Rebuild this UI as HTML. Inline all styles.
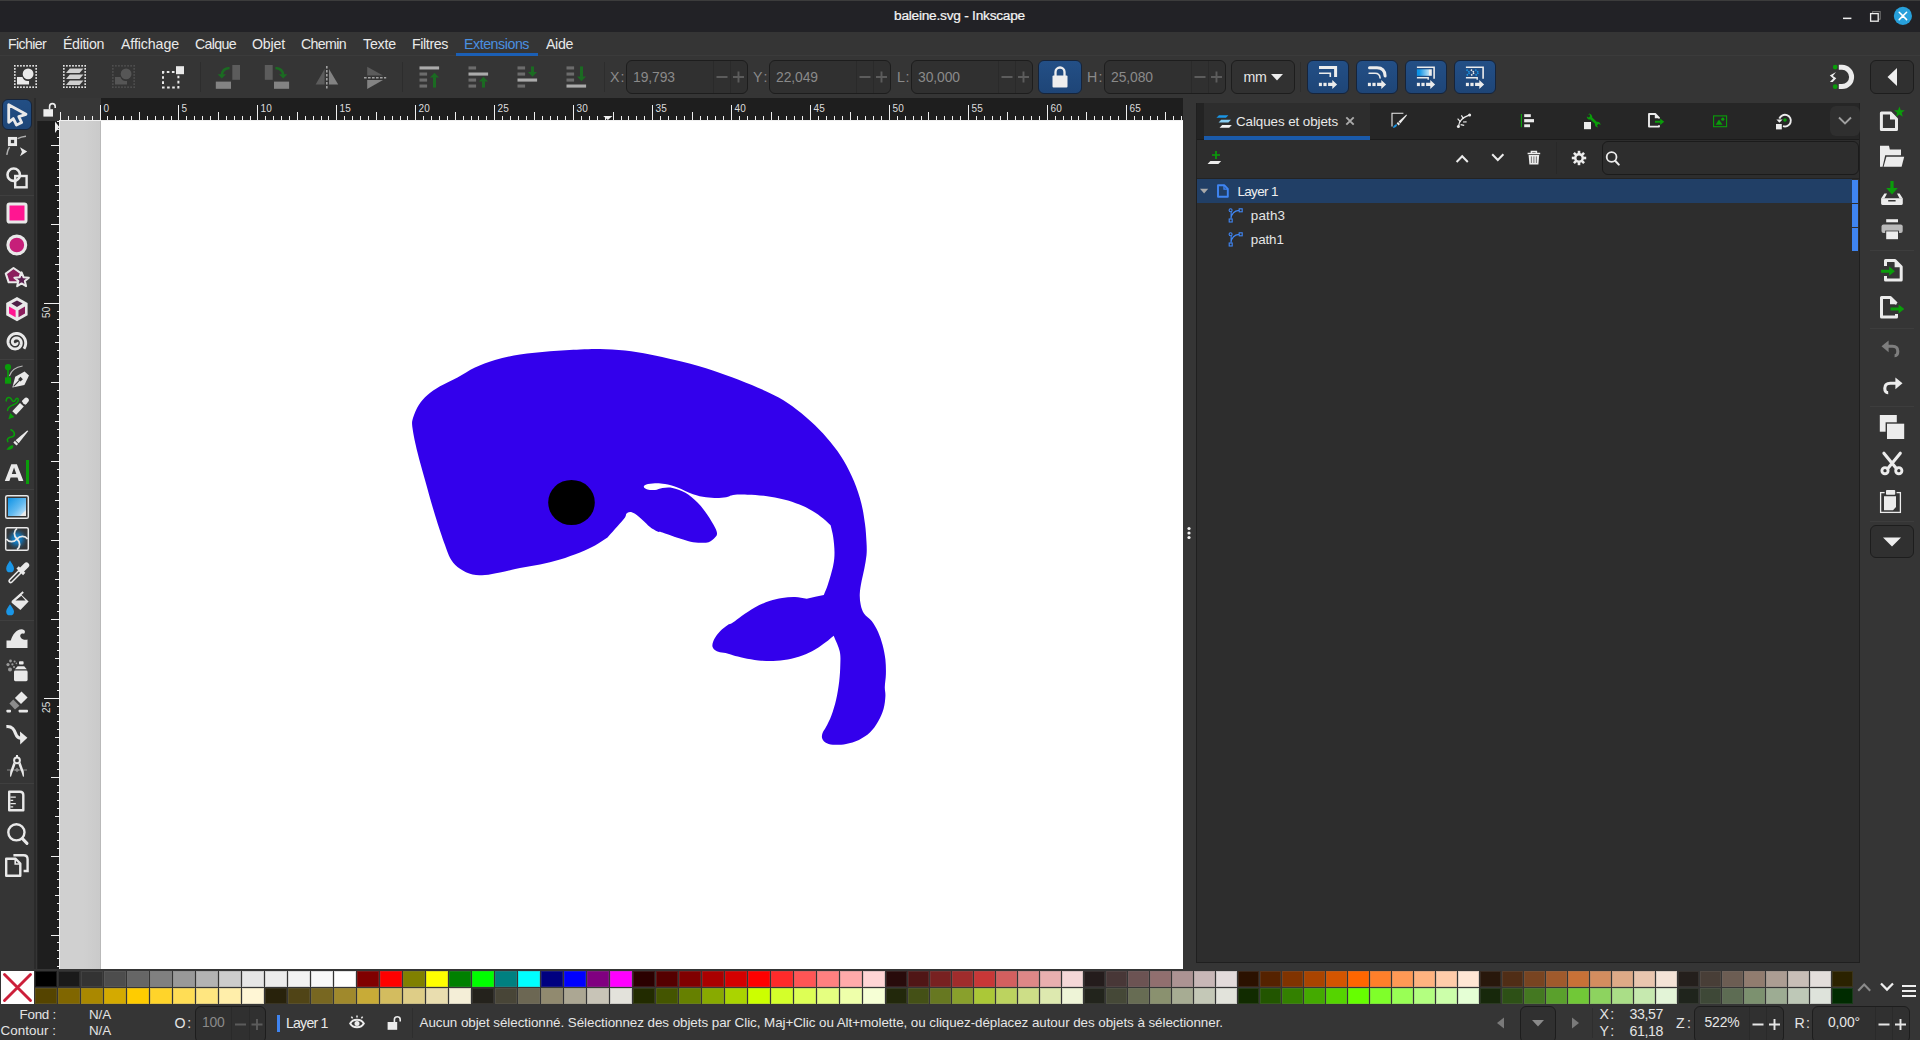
<!DOCTYPE html>
<html><head><meta charset="utf-8"><title>baleine.svg - Inkscape</title><style>html,body{margin:0;padding:0;background:#353535}
body{width:1920px;height:1040px;overflow:hidden;position:relative;font-family:"Liberation Sans",sans-serif}
#r{position:absolute;left:0;top:0;width:1920px;height:1040px;overflow:hidden}
#r div,#r svg,#r .t{position:absolute}
.t{white-space:nowrap;line-height:1}
.pal i{position:absolute;display:block;box-shadow:inset 0 0 0 1px rgba(120,120,120,.22)}
</style></head><body><div id="r">
<div style="left:0px;top:0px;width:1920px;height:1040px;background:#353535;"></div>
<div style="left:0px;top:0px;width:1920px;height:32px;background:#222226;"></div>
<div style="left:0px;top:0px;width:1920px;height:1px;background:#3c3c3c;"></div>
<div style="left:0px;top:55px;width:1920px;height:1px;background:#3b3b3b;"></div>
<div class="t" id="t0" style="left:894px;top:9.39px;font-size:13.7px;color:#f4f4f4;letter-spacing:-0.237px;-webkit-text-stroke:0.22px #f4f4f4;">baleine.svg - Inkscape</div>
<svg style="left:1836px;top:4px" width="84" height="26"><rect x="7" y="13.6" width="8.4" height="1.5" fill="#eee"/><rect x="36.6" y="7.6" width="7.6" height="7.6" fill="none" stroke="#777" stroke-width="1"/><rect x="34.6" y="9.6" width="7.6" height="7.6" fill="#222226" stroke="#eee" stroke-width="1.3"/><circle cx="66.9" cy="11.9" r="9.1" fill="#27a0db"/><path d="M63.2,8.2 L70.6,15.6 M70.6,8.2 L63.2,15.6" stroke="#fff" stroke-width="1.5" stroke-linecap="round"/></svg>
<div class="t" id="t1" style="left:8px;top:37.18px;font-size:14.2px;color:#e9e9e9;letter-spacing:-0.654px;">Fichier</div>
<div class="t" id="t2" style="left:63px;top:37.18px;font-size:14.2px;color:#e9e9e9;letter-spacing:-0.342px;">Édition</div>
<div class="t" id="t3" style="left:121px;top:37.18px;font-size:14.2px;color:#e9e9e9;letter-spacing:-0.101px;">Affichage</div>
<div class="t" id="t4" style="left:195px;top:37.18px;font-size:14.2px;color:#e9e9e9;letter-spacing:-0.661px;">Calque</div>
<div class="t" id="t5" style="left:252px;top:37.18px;font-size:14.2px;color:#e9e9e9;letter-spacing:-0.184px;">Objet</div>
<div class="t" id="t6" style="left:301px;top:37.18px;font-size:14.2px;color:#e9e9e9;letter-spacing:-0.648px;">Chemin</div>
<div class="t" id="t7" style="left:363px;top:37.18px;font-size:14.2px;color:#e9e9e9;letter-spacing:-0.184px;">Texte</div>
<div class="t" id="t8" style="left:412px;top:37.18px;font-size:14.2px;color:#e9e9e9;letter-spacing:-0.375px;">Filtres</div>
<div class="t" id="t9" style="left:464px;top:37.18px;font-size:14.2px;color:#4a90e0;letter-spacing:-0.441px;">Extensions</div>
<div class="t" id="t10" style="left:546px;top:37.18px;font-size:14.2px;color:#e9e9e9;letter-spacing:-0.352px;">Aide</div>
<div style="left:456px;top:53px;width:82px;height:3px;background:#1b5fb5;"></div>
<div class="t" id="t11" style="left:610px;top:70.18px;font-size:14.2px;color:#8a8a8a;letter-spacing:-1.453px;">X :</div>
<div class="t" id="t12" style="left:753px;top:70.18px;font-size:14.2px;color:#8a8a8a;letter-spacing:-1.365px;">Y :</div>
<div class="t" id="t13" style="left:897px;top:70.18px;font-size:14.2px;color:#8a8a8a;letter-spacing:-1.417px;">L :</div>
<div class="t" id="t14" style="left:1087px;top:70.18px;font-size:14.2px;color:#8a8a8a;letter-spacing:-1.380px;">H :</div>
<div style="left:626px;top:60px;width:122px;height:34px;box-sizing:border-box;border:1px solid #1d1d1d;border-radius:6px;background:#303030"></div>
<div style="left:713px;top:61px;width:1px;height:32px;background:#2a2a2a;"></div>
<div style="left:730px;top:61px;width:1px;height:32px;background:#2a2a2a;"></div>
<div class="t" id="t15" style="left:633px;top:70.63px;font-size:13.9px;color:#8a8a8a;letter-spacing:-0.083px;">19,793</div>
<svg style="left:626px;top:60px" width="122" height="34"><path d="M90.5,17.0 h11 M107.0,17.0 h11 M112.5,11.5 v11" stroke="#5c5c5c" stroke-width="1.9" fill="none"/></svg>
<div style="left:769px;top:60px;width:122px;height:34px;box-sizing:border-box;border:1px solid #1d1d1d;border-radius:6px;background:#303030"></div>
<div style="left:856px;top:61px;width:1px;height:32px;background:#2a2a2a;"></div>
<div style="left:873px;top:61px;width:1px;height:32px;background:#2a2a2a;"></div>
<div class="t" id="t16" style="left:776px;top:70.63px;font-size:13.9px;color:#8a8a8a;letter-spacing:-0.083px;">22,049</div>
<svg style="left:769px;top:60px" width="122" height="34"><path d="M90.5,17.0 h11 M107.0,17.0 h11 M112.5,11.5 v11" stroke="#5c5c5c" stroke-width="1.9" fill="none"/></svg>
<div style="left:911px;top:60px;width:122px;height:34px;box-sizing:border-box;border:1px solid #1d1d1d;border-radius:6px;background:#303030"></div>
<div style="left:998px;top:61px;width:1px;height:32px;background:#2a2a2a;"></div>
<div style="left:1015px;top:61px;width:1px;height:32px;background:#2a2a2a;"></div>
<div class="t" id="t17" style="left:918px;top:70.63px;font-size:13.9px;color:#8a8a8a;letter-spacing:-0.083px;">30,000</div>
<svg style="left:911px;top:60px" width="122" height="34"><path d="M90.5,17.0 h11 M107.0,17.0 h11 M112.5,11.5 v11" stroke="#5c5c5c" stroke-width="1.9" fill="none"/></svg>
<div style="left:1104px;top:60px;width:122px;height:34px;box-sizing:border-box;border:1px solid #1d1d1d;border-radius:6px;background:#303030"></div>
<div style="left:1191px;top:61px;width:1px;height:32px;background:#2a2a2a;"></div>
<div style="left:1208px;top:61px;width:1px;height:32px;background:#2a2a2a;"></div>
<div class="t" id="t18" style="left:1111px;top:70.63px;font-size:13.9px;color:#8a8a8a;letter-spacing:-0.083px;">25,080</div>
<svg style="left:1104px;top:60px" width="122" height="34"><path d="M90.5,17.0 h11 M107.0,17.0 h11 M112.5,11.5 v11" stroke="#5c5c5c" stroke-width="1.9" fill="none"/></svg>
<div style="left:1038px;top:60px;width:44px;height:34px;box-sizing:border-box;border:1px solid #16243a;border-radius:6px;background:linear-gradient(#234f86,#1e4577)"></div>
<svg style="left:1038px;top:60px" width="44" height="34"><rect x="14.5" y="15.5" width="15" height="12" rx="1" fill="#eee"/><path d="M17.5,16 v-4 a4.5,4.5 0 0 1 9,0 v4" stroke="#eee" stroke-width="2.3" fill="none"/></svg>
<div style="left:1231px;top:60px;width:64px;height:34px;box-sizing:border-box;border:1px solid #1d1d1d;border-radius:6px;background:#313131"></div>
<div class="t" id="t19" style="left:1243.5px;top:70.18px;font-size:14.2px;color:#e6e6e6;letter-spacing:-0.320px;">mm</div>
<svg style="left:1270px;top:72px" width="14" height="10"><path d="M1,2 L13,2 L7,8.5 Z" fill="#eee"/></svg>
<div style="left:200px;top:62px;width:1px;height:30px;background:#2d2d2d;"></div>
<div style="left:402px;top:62px;width:1px;height:30px;background:#2d2d2d;"></div>
<div style="left:604px;top:62px;width:1px;height:30px;background:#2d2d2d;"></div>
<div style="left:1300px;top:62px;width:1px;height:30px;background:#2d2d2d;"></div>
<div style="left:1306.5px;top:60px;width:42.8px;height:33.5px;box-sizing:border-box;border:1px solid #16243a;border-radius:6px;background:linear-gradient(#234f86,#1e4577)"></div>
<div style="left:1355.5px;top:60px;width:42.8px;height:33.5px;box-sizing:border-box;border:1px solid #16243a;border-radius:6px;background:linear-gradient(#234f86,#1e4577)"></div>
<div style="left:1404.5px;top:60px;width:42.8px;height:33.5px;box-sizing:border-box;border:1px solid #16243a;border-radius:6px;background:linear-gradient(#234f86,#1e4577)"></div>
<div style="left:1453.5px;top:60px;width:42.8px;height:33.5px;box-sizing:border-box;border:1px solid #16243a;border-radius:6px;background:linear-gradient(#234f86,#1e4577)"></div>
<div style="left:1870px;top:60px;width:44px;height:34px;box-sizing:border-box;border:1px solid #1d1d1d;border-radius:6px;background:#303030"></div>
<svg style="left:1870px;top:60px" width="44" height="34"><path d="M17.5,17 L27,8 L27,26 Z" fill="#eee"/></svg>
<div style="left:34px;top:98px;width:2px;height:871px;background:#2b2b2b;"></div>
<div style="left:1.8px;top:98.5px;width:30.5px;height:31px;box-sizing:border-box;border:1px solid #16243a;border-radius:6px;background:linear-gradient(#224e84,#1e4678)"></div>
<div style="left:0px;top:195px;width:34px;height:1px;background:#3f3f3f;"></div>
<div style="left:0px;top:359px;width:34px;height:1px;background:#3f3f3f;"></div>
<div style="left:0px;top:489px;width:34px;height:1px;background:#3f3f3f;"></div>
<div style="left:0px;top:620px;width:34px;height:1px;background:#3f3f3f;"></div>
<div style="left:0px;top:783px;width:34px;height:1px;background:#3f3f3f;"></div>
<div style="left:37px;top:98px;width:1146px;height:23px;background:#1e1e1e;"></div>
<div style="left:37px;top:98px;width:23px;height:23px;background:#353535;"></div>
<div style="left:60px;top:98px;width:41px;height:22px;background:#373737;"></div>
<div style="left:37px;top:121px;width:23px;height:848px;background:#1e1e1e;"></div>
<div style="left:37px;top:121px;width:1px;height:848px;background:#242424;"></div>
<svg style="left:0;top:0" width="1200" height="970" fill="#f0f0f0" shape-rendering="crispEdges"><rect x="60" y="112" width="1" height="8"/><rect x="68" y="116" width="1" height="4"/><rect x="76" y="116" width="1" height="4"/><rect x="84" y="116" width="1" height="4"/><rect x="92" y="116" width="1" height="4"/><rect x="100" y="105" width="1" height="15"/><rect x="107" y="116" width="1" height="4"/><rect x="115" y="116" width="1" height="4"/><rect x="123" y="116" width="1" height="4"/><rect x="131" y="116" width="1" height="4"/><rect x="139" y="112" width="1" height="8"/><rect x="147" y="116" width="1" height="4"/><rect x="155" y="116" width="1" height="4"/><rect x="163" y="116" width="1" height="4"/><rect x="171" y="116" width="1" height="4"/><rect x="178" y="105" width="1" height="15"/><rect x="186" y="116" width="1" height="4"/><rect x="194" y="116" width="1" height="4"/><rect x="202" y="116" width="1" height="4"/><rect x="210" y="116" width="1" height="4"/><rect x="218" y="112" width="1" height="8"/><rect x="226" y="116" width="1" height="4"/><rect x="234" y="116" width="1" height="4"/><rect x="242" y="116" width="1" height="4"/><rect x="250" y="116" width="1" height="4"/><rect x="257" y="105" width="1" height="15"/><rect x="265" y="116" width="1" height="4"/><rect x="273" y="116" width="1" height="4"/><rect x="281" y="116" width="1" height="4"/><rect x="289" y="116" width="1" height="4"/><rect x="297" y="112" width="1" height="8"/><rect x="305" y="116" width="1" height="4"/><rect x="313" y="116" width="1" height="4"/><rect x="321" y="116" width="1" height="4"/><rect x="328" y="116" width="1" height="4"/><rect x="336" y="105" width="1" height="15"/><rect x="344" y="116" width="1" height="4"/><rect x="352" y="116" width="1" height="4"/><rect x="360" y="116" width="1" height="4"/><rect x="368" y="116" width="1" height="4"/><rect x="376" y="112" width="1" height="8"/><rect x="384" y="116" width="1" height="4"/><rect x="392" y="116" width="1" height="4"/><rect x="400" y="116" width="1" height="4"/><rect x="407" y="116" width="1" height="4"/><rect x="415" y="105" width="1" height="15"/><rect x="423" y="116" width="1" height="4"/><rect x="431" y="116" width="1" height="4"/><rect x="439" y="116" width="1" height="4"/><rect x="447" y="116" width="1" height="4"/><rect x="455" y="112" width="1" height="8"/><rect x="463" y="116" width="1" height="4"/><rect x="471" y="116" width="1" height="4"/><rect x="478" y="116" width="1" height="4"/><rect x="486" y="116" width="1" height="4"/><rect x="494" y="105" width="1" height="15"/><rect x="502" y="116" width="1" height="4"/><rect x="510" y="116" width="1" height="4"/><rect x="518" y="116" width="1" height="4"/><rect x="526" y="116" width="1" height="4"/><rect x="534" y="112" width="1" height="8"/><rect x="542" y="116" width="1" height="4"/><rect x="550" y="116" width="1" height="4"/><rect x="557" y="116" width="1" height="4"/><rect x="565" y="116" width="1" height="4"/><rect x="573" y="105" width="1" height="15"/><rect x="581" y="116" width="1" height="4"/><rect x="589" y="116" width="1" height="4"/><rect x="597" y="116" width="1" height="4"/><rect x="605" y="116" width="1" height="4"/><rect x="613" y="112" width="1" height="8"/><rect x="621" y="116" width="1" height="4"/><rect x="628" y="116" width="1" height="4"/><rect x="636" y="116" width="1" height="4"/><rect x="644" y="116" width="1" height="4"/><rect x="652" y="105" width="1" height="15"/><rect x="660" y="116" width="1" height="4"/><rect x="668" y="116" width="1" height="4"/><rect x="676" y="116" width="1" height="4"/><rect x="684" y="116" width="1" height="4"/><rect x="692" y="112" width="1" height="8"/><rect x="700" y="116" width="1" height="4"/><rect x="707" y="116" width="1" height="4"/><rect x="715" y="116" width="1" height="4"/><rect x="723" y="116" width="1" height="4"/><rect x="731" y="105" width="1" height="15"/><rect x="739" y="116" width="1" height="4"/><rect x="747" y="116" width="1" height="4"/><rect x="755" y="116" width="1" height="4"/><rect x="763" y="116" width="1" height="4"/><rect x="771" y="112" width="1" height="8"/><rect x="778" y="116" width="1" height="4"/><rect x="786" y="116" width="1" height="4"/><rect x="794" y="116" width="1" height="4"/><rect x="802" y="116" width="1" height="4"/><rect x="810" y="105" width="1" height="15"/><rect x="818" y="116" width="1" height="4"/><rect x="826" y="116" width="1" height="4"/><rect x="834" y="116" width="1" height="4"/><rect x="842" y="116" width="1" height="4"/><rect x="850" y="112" width="1" height="8"/><rect x="857" y="116" width="1" height="4"/><rect x="865" y="116" width="1" height="4"/><rect x="873" y="116" width="1" height="4"/><rect x="881" y="116" width="1" height="4"/><rect x="889" y="105" width="1" height="15"/><rect x="897" y="116" width="1" height="4"/><rect x="905" y="116" width="1" height="4"/><rect x="913" y="116" width="1" height="4"/><rect x="921" y="116" width="1" height="4"/><rect x="928" y="112" width="1" height="8"/><rect x="936" y="116" width="1" height="4"/><rect x="944" y="116" width="1" height="4"/><rect x="952" y="116" width="1" height="4"/><rect x="960" y="116" width="1" height="4"/><rect x="968" y="105" width="1" height="15"/><rect x="976" y="116" width="1" height="4"/><rect x="984" y="116" width="1" height="4"/><rect x="992" y="116" width="1" height="4"/><rect x="1000" y="116" width="1" height="4"/><rect x="1007" y="112" width="1" height="8"/><rect x="1015" y="116" width="1" height="4"/><rect x="1023" y="116" width="1" height="4"/><rect x="1031" y="116" width="1" height="4"/><rect x="1039" y="116" width="1" height="4"/><rect x="1047" y="105" width="1" height="15"/><rect x="1055" y="116" width="1" height="4"/><rect x="1063" y="116" width="1" height="4"/><rect x="1071" y="116" width="1" height="4"/><rect x="1078" y="116" width="1" height="4"/><rect x="1086" y="112" width="1" height="8"/><rect x="1094" y="116" width="1" height="4"/><rect x="1102" y="116" width="1" height="4"/><rect x="1110" y="116" width="1" height="4"/><rect x="1118" y="116" width="1" height="4"/><rect x="1126" y="105" width="1" height="15"/><rect x="1134" y="116" width="1" height="4"/><rect x="1142" y="116" width="1" height="4"/><rect x="1150" y="116" width="1" height="4"/><rect x="1157" y="116" width="1" height="4"/><rect x="1165" y="112" width="1" height="8"/><rect x="1173" y="116" width="1" height="4"/><rect x="1181" y="116" width="1" height="4"/><rect x="60" y="120" width="1123" height="1"/><rect x="57" y="121" width="2" height="1"/><rect x="57" y="129" width="2" height="1"/><rect x="57" y="137" width="2" height="1"/><rect x="51" y="145" width="8" height="1"/><rect x="57" y="153" width="2" height="1"/><rect x="57" y="161" width="2" height="1"/><rect x="57" y="169" width="2" height="1"/><rect x="57" y="177" width="2" height="1"/><rect x="55" y="185" width="4" height="1"/><rect x="57" y="192" width="2" height="1"/><rect x="57" y="200" width="2" height="1"/><rect x="57" y="208" width="2" height="1"/><rect x="57" y="216" width="2" height="1"/><rect x="51" y="224" width="8" height="1"/><rect x="57" y="232" width="2" height="1"/><rect x="57" y="240" width="2" height="1"/><rect x="57" y="248" width="2" height="1"/><rect x="57" y="256" width="2" height="1"/><rect x="55" y="264" width="4" height="1"/><rect x="57" y="271" width="2" height="1"/><rect x="57" y="279" width="2" height="1"/><rect x="57" y="287" width="2" height="1"/><rect x="57" y="295" width="2" height="1"/><rect x="44" y="303" width="15" height="1"/><rect x="57" y="311" width="2" height="1"/><rect x="57" y="319" width="2" height="1"/><rect x="57" y="327" width="2" height="1"/><rect x="57" y="335" width="2" height="1"/><rect x="55" y="342" width="4" height="1"/><rect x="57" y="350" width="2" height="1"/><rect x="57" y="358" width="2" height="1"/><rect x="57" y="366" width="2" height="1"/><rect x="57" y="374" width="2" height="1"/><rect x="51" y="382" width="8" height="1"/><rect x="57" y="390" width="2" height="1"/><rect x="57" y="398" width="2" height="1"/><rect x="57" y="406" width="2" height="1"/><rect x="57" y="414" width="2" height="1"/><rect x="55" y="421" width="4" height="1"/><rect x="57" y="429" width="2" height="1"/><rect x="57" y="437" width="2" height="1"/><rect x="57" y="445" width="2" height="1"/><rect x="57" y="453" width="2" height="1"/><rect x="51" y="461" width="8" height="1"/><rect x="57" y="469" width="2" height="1"/><rect x="57" y="477" width="2" height="1"/><rect x="57" y="485" width="2" height="1"/><rect x="57" y="492" width="2" height="1"/><rect x="55" y="500" width="4" height="1"/><rect x="57" y="508" width="2" height="1"/><rect x="57" y="516" width="2" height="1"/><rect x="57" y="524" width="2" height="1"/><rect x="57" y="532" width="2" height="1"/><rect x="51" y="540" width="8" height="1"/><rect x="57" y="548" width="2" height="1"/><rect x="57" y="556" width="2" height="1"/><rect x="57" y="564" width="2" height="1"/><rect x="57" y="571" width="2" height="1"/><rect x="55" y="579" width="4" height="1"/><rect x="57" y="587" width="2" height="1"/><rect x="57" y="595" width="2" height="1"/><rect x="57" y="603" width="2" height="1"/><rect x="57" y="611" width="2" height="1"/><rect x="51" y="619" width="8" height="1"/><rect x="57" y="627" width="2" height="1"/><rect x="57" y="635" width="2" height="1"/><rect x="57" y="642" width="2" height="1"/><rect x="57" y="650" width="2" height="1"/><rect x="55" y="658" width="4" height="1"/><rect x="57" y="666" width="2" height="1"/><rect x="57" y="674" width="2" height="1"/><rect x="57" y="682" width="2" height="1"/><rect x="57" y="690" width="2" height="1"/><rect x="44" y="698" width="15" height="1"/><rect x="57" y="706" width="2" height="1"/><rect x="57" y="714" width="2" height="1"/><rect x="57" y="721" width="2" height="1"/><rect x="57" y="729" width="2" height="1"/><rect x="55" y="737" width="4" height="1"/><rect x="57" y="745" width="2" height="1"/><rect x="57" y="753" width="2" height="1"/><rect x="57" y="761" width="2" height="1"/><rect x="57" y="769" width="2" height="1"/><rect x="51" y="777" width="8" height="1"/><rect x="57" y="785" width="2" height="1"/><rect x="57" y="792" width="2" height="1"/><rect x="57" y="800" width="2" height="1"/><rect x="57" y="808" width="2" height="1"/><rect x="55" y="816" width="4" height="1"/><rect x="57" y="824" width="2" height="1"/><rect x="57" y="832" width="2" height="1"/><rect x="57" y="840" width="2" height="1"/><rect x="57" y="848" width="2" height="1"/><rect x="51" y="856" width="8" height="1"/><rect x="57" y="864" width="2" height="1"/><rect x="57" y="871" width="2" height="1"/><rect x="57" y="879" width="2" height="1"/><rect x="57" y="887" width="2" height="1"/><rect x="55" y="895" width="4" height="1"/><rect x="57" y="903" width="2" height="1"/><rect x="57" y="911" width="2" height="1"/><rect x="57" y="919" width="2" height="1"/><rect x="57" y="927" width="2" height="1"/><rect x="51" y="935" width="8" height="1"/><rect x="57" y="942" width="2" height="1"/><rect x="57" y="950" width="2" height="1"/><rect x="57" y="958" width="2" height="1"/><rect x="57" y="966" width="2" height="1"/><rect x="59" y="120" width="1" height="849"/></svg>
<div class="t" id="t20" style="left:103.4px;top:103.88px;font-size:10px;color:#dcdcdc;letter-spacing:0.287px;">0</div>
<div class="t" id="t21" style="left:181.4px;top:103.88px;font-size:10px;color:#dcdcdc;letter-spacing:0.287px;">5</div>
<div class="t" id="t22" style="left:260.4px;top:103.88px;font-size:10px;color:#dcdcdc;letter-spacing:0.287px;">10</div>
<div class="t" id="t23" style="left:339.4px;top:103.88px;font-size:10px;color:#dcdcdc;letter-spacing:0.287px;">15</div>
<div class="t" id="t24" style="left:418.4px;top:103.88px;font-size:10px;color:#dcdcdc;letter-spacing:0.287px;">20</div>
<div class="t" id="t25" style="left:497.4px;top:103.88px;font-size:10px;color:#dcdcdc;letter-spacing:0.287px;">25</div>
<div class="t" id="t26" style="left:576.4px;top:103.88px;font-size:10px;color:#dcdcdc;letter-spacing:0.287px;">30</div>
<div class="t" id="t27" style="left:655.4px;top:103.88px;font-size:10px;color:#dcdcdc;letter-spacing:0.287px;">35</div>
<div class="t" id="t28" style="left:734.4px;top:103.88px;font-size:10px;color:#dcdcdc;letter-spacing:0.287px;">40</div>
<div class="t" id="t29" style="left:813.4px;top:103.88px;font-size:10px;color:#dcdcdc;letter-spacing:0.287px;">45</div>
<div class="t" id="t30" style="left:892.4px;top:103.88px;font-size:10px;color:#dcdcdc;letter-spacing:0.287px;">50</div>
<div class="t" id="t31" style="left:971.4px;top:103.88px;font-size:10px;color:#dcdcdc;letter-spacing:0.287px;">55</div>
<div class="t" id="t32" style="left:1050.4px;top:103.88px;font-size:10px;color:#dcdcdc;letter-spacing:0.287px;">60</div>
<div class="t" id="t33" style="left:1129.4px;top:103.88px;font-size:10px;color:#dcdcdc;letter-spacing:0.287px;">65</div>
<div class="t" style="left:42px;top:318px;font-size:10px;letter-spacing:0.3px;color:#dcdcdc;transform-origin:0 0;transform:rotate(-90deg);line-height:10px;height:10px">50</div>
<div class="t" style="left:42px;top:713px;font-size:10px;letter-spacing:0.3px;color:#dcdcdc;transform-origin:0 0;transform:rotate(-90deg);line-height:10px;height:10px">25</div>
<svg style="left:603px;top:115px" width="10" height="6"><path d="M0.2,0.9 L9.5,0.9 L4.8,5.1 Z" fill="#f0f0f0"/></svg>
<svg style="left:52px;top:121px" width="8" height="14"><path d="M3,0.4 L7.4,6 L3,12 Z" fill="#f0f0f0"/></svg>
<div style="left:60px;top:121px;width:1123px;height:848px;background:#fff;"></div>
<div style="left:60px;top:121px;width:40px;height:848px;background:linear-gradient(90deg,#d0d0d0 0,#d0d0d0 60%,#cacaca 100%)"></div>
<div style="left:100px;top:121px;width:1px;height:848px;background:#b9b9b9;"></div>
<svg style="left:0;top:0" width="1183" height="969"><path d="M412.5,428 C411.8,422.2 411.9,421.8 413,418 C414.1,414.2 416.4,408.8 418.8,405 C421.2,401.2 424.0,398.1 427.5,395 C431.0,391.9 435.0,389.2 440,386.3 C445.0,383.4 451.7,380.6 457.5,377.5 C463.3,374.4 468.8,370.4 475,367.5 C481.2,364.6 487.5,362.2 495,360 C502.5,357.8 510.8,355.9 520,354.5 C529.2,353.1 540.0,352.1 550,351.3 C560.0,350.5 571.7,349.9 580,349.5 C588.3,349.1 592.5,348.8 600,349 C607.5,349.2 616.7,349.6 625,350.5 C633.3,351.4 641.7,352.9 650,354.5 C658.3,356.1 665.7,357.7 675,360 C684.3,362.3 696.5,365.3 706,368.2 C715.5,371.1 723.3,374.1 732,377.3 C740.7,380.6 750.2,384.3 758,387.7 C765.8,391.1 772.2,393.8 778.7,397.5 C785.2,401.2 790.9,405.1 796.9,409.7 C802.9,414.3 809.4,419.9 815,425.3 C820.6,430.7 825.8,436.4 830.6,442.2 C835.4,448.0 839.7,453.9 843.6,460.4 C847.5,466.9 851.0,474.1 854,481.2 C857.0,488.3 859.5,496.1 861.3,503.2 C863.1,510.3 864.1,517.5 865,524 C865.9,530.5 866.2,537.0 866.5,542.2 C866.8,547.4 866.9,550.9 866.5,555.2 C866.1,559.5 865.2,563.9 864.4,568.2 C863.6,572.5 862.4,576.8 861.6,581 C860.8,585.2 859.9,589.8 859.8,593.7 C859.6,597.7 860.0,601.4 860.7,604.7 C861.4,608.0 862.2,610.8 864,613.5 C865.8,616.2 869.4,618.0 871.7,621.1 C874.1,624.2 876.3,628.1 878.1,632.1 C879.9,636.1 881.4,640.3 882.6,644.9 C883.8,649.5 884.9,654.6 885.4,659.5 C885.9,664.4 886.0,669.5 885.9,674.1 C885.8,678.7 884.9,683.2 884.8,686.9 C884.7,690.5 885.6,692.4 885.4,696 C885.2,699.6 884.8,704.5 883.6,708.8 C882.4,713.1 880.4,717.6 878.1,721.6 C875.8,725.6 873.1,729.6 869.9,732.6 C866.7,735.6 862.9,738.0 858.9,739.9 C854.9,741.8 850.0,743.1 846.1,743.9 C842.2,744.7 838.4,744.9 835.2,744.8 C832.0,744.7 829.0,744.2 826.9,743.2 C824.8,742.2 823.1,740.5 822.4,738.9 C821.6,737.3 821.8,735.5 822.4,733.5 C823.0,731.5 824.5,730.1 826,727.1 C827.5,724.1 829.8,719.8 831.5,715.2 C833.2,710.6 834.8,705.3 836.1,699.7 C837.4,694.1 838.5,687.2 839.2,681.4 C839.9,675.6 840.2,670.0 840.3,665 C840.4,660.0 840.8,656.2 839.7,651.3 C838.6,646.4 835.7,641.0 833.7,635.8 C831.1,637.9 829.1,639.8 826,642.1 C822.9,644.4 819.1,647.3 815.1,649.5 C811.1,651.7 806.9,653.8 802.3,655.5 C797.7,657.2 792.6,658.6 787.7,659.5 C782.8,660.4 778.0,660.9 773.1,661 C768.2,661.1 763.3,660.9 758.4,660.4 C753.5,659.9 748.0,658.9 743.8,658 C739.5,657.1 735.9,656.1 732.9,655.3 C729.9,654.5 728.0,653.7 725.6,653.1 C723.2,652.5 720.3,652.5 718.3,651.8 C716.3,651.1 714.7,650.0 713.7,648.9 C712.7,647.8 712.2,646.6 712.4,644.9 C712.5,643.2 713.3,640.8 714.6,638.5 C715.9,636.2 718.0,633.4 720.1,631.2 C722.2,629.0 725.3,626.6 727.4,625.2 C729.5,623.8 730.5,624.2 732.9,622.6 C735.3,621.0 738.4,618.2 742,615.7 C745.6,613.2 750.2,609.9 754.8,607.4 C759.4,604.9 764.8,602.6 769.4,601 C774.0,599.4 777.9,598.6 782.2,597.9 C786.5,597.2 790.9,596.9 795,597 C799.1,597.1 802.9,598.1 806.8,598.7 C812.5,597.5 818.1,596.2 823.8,595 C825.2,591.5 826.3,589.5 827.9,584.6 C829.5,579.7 832.1,570.9 833.2,565.6 C834.3,560.3 834.5,557.4 834.5,552.6 C834.5,547.8 833.9,541.5 833.2,537 C832.6,532.5 831.5,529.2 830.6,525.3 C828.0,523.0 825.9,520.7 822.9,518.3 C819.9,515.9 816.4,513.3 812.5,511 C808.6,508.7 804.3,506.4 799.5,504.5 C794.7,502.6 789.5,500.8 783.9,499.4 C778.3,498.0 771.8,496.8 765.7,496 C759.6,495.2 752.9,494.9 747.5,494.7 C742.1,494.5 736.5,494.6 733.2,495 C730.0,495.4 730.4,496.3 728,496.8 C725.6,497.3 722.7,497.9 719,498 C715.3,498.1 710.3,497.9 706,497.3 C701.7,496.7 697.8,495.8 693,494.2 C688.2,492.6 682.2,489.2 677.5,487.5 C672.8,485.8 668.8,484.7 665,484 C661.2,483.3 658.1,483.2 655,483.3 C651.9,483.4 648.2,483.9 646.3,484.5 C644.4,485.1 643.6,486.2 643.8,487 C644.0,487.8 645.6,489.0 647.5,489.5 C649.4,490.0 652.5,490.2 655,490 C657.5,489.8 659.6,488.3 662.5,488 C665.4,487.7 668.8,487.2 672.5,488 C676.2,488.8 680.8,490.1 685,492.5 C689.2,494.9 693.8,498.8 697.5,502.5 C701.2,506.2 704.6,510.8 707.5,515 C710.4,519.2 713.4,524.4 715,527.5 C716.6,530.6 717.0,532.1 717,533.8 C717.0,535.5 716.4,536.1 715,537.5 C713.6,538.9 711.4,541.3 708.6,542.2 C705.8,543.1 701.7,542.9 698.2,542.7 C694.7,542.5 691.7,541.9 687.8,540.9 C683.9,539.9 679.2,538.4 675,537 C670.8,535.6 665.4,533.4 662.5,532.5 C659.6,531.6 659.6,532.4 657.5,531.5 C655.4,530.6 652.5,528.9 650,527 C647.5,525.1 645.0,522.2 642.5,520 C640.0,517.8 637.1,515.1 635,513.8 C632.9,512.5 631.5,512.0 630,512 C628.5,512.0 627.1,512.9 626.3,513.8 C625.5,514.7 626.5,515.4 625,517.5 C623.5,519.6 620.4,523.0 617.5,526.3 C614.6,529.6 610.8,533.8 607.5,537.5 C603.3,540.2 599.6,543.0 595,545.5 C590.4,548.0 585.8,550.2 580,552.5 C574.2,554.8 566.7,557.5 560,559.5 C553.3,561.5 546.7,563.1 540,564.5 C533.3,565.9 526.7,566.7 520,568 C513.3,569.3 505.8,571.3 500,572.5 C494.2,573.7 489.6,574.7 485,575 C480.4,575.3 476.7,575.5 472.5,574.5 C468.3,573.5 463.5,571.2 460,568.8 C456.5,566.4 453.8,564.0 451.3,560 C448.8,556.0 447.7,552.5 445,545 C442.3,537.5 438.3,525.8 435,515 C431.7,504.2 427.9,490.4 425,480 C422.1,469.6 419.6,461.2 417.5,452.5 C415.4,443.8 413.2,433.8 412.5,428Z" fill="#3300ec"/><ellipse cx="571.5" cy="502.5" rx="23.3" ry="22.6" fill="#000"/></svg>
<svg style="left:40px;top:100px" width="18" height="20"><rect x="3.4" y="9.2" width="9.6" height="7.4" fill="#eee"/><path d="M9.6,9.2 v-2.8 a2.8,2.8 0 0 1 5.6,0 v1.6" stroke="#eee" stroke-width="1.6" fill="none"/></svg>
<svg style="left:1184px;top:524px" width="10" height="18" fill="#f2f2f2"><circle cx="5" cy="4.5" r="1.6"/><circle cx="5" cy="9" r="1.6"/><circle cx="5" cy="13.5" r="1.6"/></svg>
<div style="left:1196px;top:103px;width:664px;height:860px;background:#1f1f1f;"></div>
<div style="left:1197px;top:103px;width:662px;height:37px;background:#262626;"></div>
<div style="left:1197px;top:103px;width:7px;height:36px;background:#232323;"></div>
<div style="left:1204px;top:103px;width:166px;height:37px;background:#2d2d2d;"></div>
<div style="left:1204px;top:136px;width:166px;height:4px;background:#1a5aaa;"></div>
<div style="left:1197px;top:139px;width:7px;height:1px;background:#1b1b1b;"></div>
<div style="left:1370px;top:139px;width:489px;height:1px;background:#1b1b1b;"></div>
<div style="left:1197px;top:140px;width:662px;height:822px;background:#2d2d2d;"></div>
<div style="left:1197px;top:178px;width:662px;height:1px;background:#232323;"></div>
<div class="t" id="t34" style="left:1236px;top:114.64px;font-size:13.4px;color:#e9e9e9;letter-spacing:-0.087px;">Calques et objets</div>
<svg style="left:1344px;top:115px" width="12" height="12"><path d="M2.3,2.3 L9.7,9.7 M9.7,2.3 L2.3,9.7" stroke="#aaa" stroke-width="1.9"/></svg>
<div style="left:1829.5px;top:106px;width:30px;height:30px;border-radius:6px;background:#2f2f2f"></div>
<svg style="left:1830px;top:106px" width="30" height="30"><path d="M9,11.5 L15,17.5 L21,11.5" stroke="#a0a0a0" stroke-width="1.9" fill="none"/></svg>
<div style="left:1602px;top:141px;width:257px;height:34px;box-sizing:border-box;border:1px solid #1b1b1b;border-radius:6px;background:#2d2d2d"></div>
<div style="left:1556px;top:142px;width:1px;height:32px;background:#282828;"></div>
<div style="left:1197px;top:179px;width:655px;height:24px;background:#213f66;"></div>
<div style="left:1852px;top:180px;width:6px;height:23px;background:#3f84f0;"></div>
<div style="left:1852px;top:204px;width:6px;height:23px;background:#3f84f0;"></div>
<div style="left:1852px;top:228px;width:6px;height:23px;background:#3f84f0;"></div>
<div class="t" id="t35" style="left:1237.4px;top:184.84px;font-size:13.4px;color:#efefef;letter-spacing:-0.582px;">Layer 1</div>
<div class="t" id="t36" style="left:1250.8px;top:208.84px;font-size:13.4px;color:#e6e6e6;letter-spacing:0.157px;">path3</div>
<div class="t" id="t37" style="left:1250.8px;top:232.74px;font-size:13.4px;color:#e6e6e6;letter-spacing:-0.103px;">path1</div>
<div style="left:1870px;top:250px;width:44px;height:1px;background:#3d3d3d;"></div>
<div style="left:1870px;top:328px;width:44px;height:1px;background:#3d3d3d;"></div>
<div style="left:1870px;top:406px;width:44px;height:1px;background:#3d3d3d;"></div>
<div style="left:1870px;top:521px;width:44px;height:1px;background:#3d3d3d;"></div>
<div style="left:1870px;top:525px;width:44px;height:33px;box-sizing:border-box;border:1px solid #1d1d1d;border-radius:6px;background:#303030"></div>
<svg style="left:1870px;top:525px" width="44" height="33"><path d="M13,12.5 L31,12.5 L22,21.5 Z" fill="#eee"/></svg>
<div class="pal"><i style="left:35px;top:971px;width:22px;height:16px;background:#000000"></i><i style="left:35px;top:988px;width:22px;height:16px;background:#554400"></i><i style="left:58px;top:971px;width:22px;height:16px;background:#1a1a1a"></i><i style="left:58px;top:988px;width:22px;height:16px;background:#806600"></i><i style="left:81px;top:971px;width:22px;height:16px;background:#333333"></i><i style="left:81px;top:988px;width:22px;height:16px;background:#aa8800"></i><i style="left:104px;top:971px;width:22px;height:16px;background:#4d4d4d"></i><i style="left:104px;top:988px;width:22px;height:16px;background:#d4aa00"></i><i style="left:127px;top:971px;width:22px;height:16px;background:#666666"></i><i style="left:127px;top:988px;width:22px;height:16px;background:#ffcc00"></i><i style="left:150px;top:971px;width:22px;height:16px;background:#808080"></i><i style="left:150px;top:988px;width:22px;height:16px;background:#ffd42a"></i><i style="left:173px;top:971px;width:22px;height:16px;background:#999999"></i><i style="left:173px;top:988px;width:22px;height:16px;background:#ffdd55"></i><i style="left:196px;top:971px;width:22px;height:16px;background:#b3b3b3"></i><i style="left:196px;top:988px;width:22px;height:16px;background:#ffe680"></i><i style="left:219px;top:971px;width:22px;height:16px;background:#cccccc"></i><i style="left:219px;top:988px;width:22px;height:16px;background:#ffeeaa"></i><i style="left:242px;top:971px;width:22px;height:16px;background:#e6e6e6"></i><i style="left:242px;top:988px;width:22px;height:16px;background:#fff6d5"></i><i style="left:265px;top:971px;width:22px;height:16px;background:#ececec"></i><i style="left:265px;top:988px;width:22px;height:16px;background:#28220b"></i><i style="left:288px;top:971px;width:22px;height:16px;background:#f2f2f2"></i><i style="left:288px;top:988px;width:22px;height:16px;background:#504416"></i><i style="left:311px;top:971px;width:22px;height:16px;background:#f9f9f9"></i><i style="left:311px;top:988px;width:22px;height:16px;background:#786721"></i><i style="left:334px;top:971px;width:22px;height:16px;background:#ffffff"></i><i style="left:334px;top:988px;width:22px;height:16px;background:#a0892c"></i><i style="left:357px;top:971px;width:22px;height:16px;background:#800000"></i><i style="left:357px;top:988px;width:22px;height:16px;background:#c8ab37"></i><i style="left:380px;top:971px;width:22px;height:16px;background:#ff0000"></i><i style="left:380px;top:988px;width:22px;height:16px;background:#d3bc5f"></i><i style="left:403px;top:971px;width:22px;height:16px;background:#808000"></i><i style="left:403px;top:988px;width:22px;height:16px;background:#decd87"></i><i style="left:426px;top:971px;width:22px;height:16px;background:#ffff00"></i><i style="left:426px;top:988px;width:22px;height:16px;background:#e9ddaf"></i><i style="left:449px;top:971px;width:22px;height:16px;background:#008000"></i><i style="left:449px;top:988px;width:22px;height:16px;background:#f4eed7"></i><i style="left:472px;top:971px;width:22px;height:16px;background:#00ff00"></i><i style="left:472px;top:988px;width:22px;height:16px;background:#24221c"></i><i style="left:495px;top:971px;width:22px;height:16px;background:#008080"></i><i style="left:495px;top:988px;width:22px;height:16px;background:#484537"></i><i style="left:518px;top:971px;width:22px;height:16px;background:#00ffff"></i><i style="left:518px;top:988px;width:22px;height:16px;background:#6c6753"></i><i style="left:541px;top:971px;width:22px;height:16px;background:#000080"></i><i style="left:541px;top:988px;width:22px;height:16px;background:#918a6f"></i><i style="left:564px;top:971px;width:22px;height:16px;background:#0000ff"></i><i style="left:564px;top:988px;width:22px;height:16px;background:#aca793"></i><i style="left:587px;top:971px;width:22px;height:16px;background:#800080"></i><i style="left:587px;top:988px;width:22px;height:16px;background:#c8c4b7"></i><i style="left:610px;top:971px;width:22px;height:16px;background:#ff00ff"></i><i style="left:610px;top:988px;width:22px;height:16px;background:#e3e2db"></i><i style="left:633px;top:971px;width:22px;height:16px;background:#2b0000"></i><i style="left:633px;top:988px;width:22px;height:16px;background:#222b00"></i><i style="left:656px;top:971px;width:22px;height:16px;background:#550000"></i><i style="left:656px;top:988px;width:22px;height:16px;background:#445500"></i><i style="left:679px;top:971px;width:22px;height:16px;background:#800000"></i><i style="left:679px;top:988px;width:22px;height:16px;background:#668000"></i><i style="left:702px;top:971px;width:22px;height:16px;background:#aa0000"></i><i style="left:702px;top:988px;width:22px;height:16px;background:#88aa00"></i><i style="left:725px;top:971px;width:22px;height:16px;background:#d40000"></i><i style="left:725px;top:988px;width:22px;height:16px;background:#aad400"></i><i style="left:748px;top:971px;width:22px;height:16px;background:#ff0000"></i><i style="left:748px;top:988px;width:22px;height:16px;background:#ccff00"></i><i style="left:771px;top:971px;width:22px;height:16px;background:#ff2a2a"></i><i style="left:771px;top:988px;width:22px;height:16px;background:#d4ff2a"></i><i style="left:794px;top:971px;width:22px;height:16px;background:#ff5555"></i><i style="left:794px;top:988px;width:22px;height:16px;background:#ddff55"></i><i style="left:817px;top:971px;width:22px;height:16px;background:#ff8080"></i><i style="left:817px;top:988px;width:22px;height:16px;background:#e5ff80"></i><i style="left:840px;top:971px;width:22px;height:16px;background:#ffaaaa"></i><i style="left:840px;top:988px;width:22px;height:16px;background:#eeffaa"></i><i style="left:863px;top:971px;width:22px;height:16px;background:#ffd5d5"></i><i style="left:863px;top:988px;width:22px;height:16px;background:#f6ffd5"></i><i style="left:886px;top:971px;width:21px;height:16px;background:#280b0b"></i><i style="left:886px;top:988px;width:21px;height:16px;background:#22280b"></i><i style="left:908px;top:971px;width:21px;height:16px;background:#501616"></i><i style="left:908px;top:988px;width:21px;height:16px;background:#445016"></i><i style="left:930px;top:971px;width:21px;height:16px;background:#782121"></i><i style="left:930px;top:988px;width:21px;height:16px;background:#677821"></i><i style="left:952px;top:971px;width:21px;height:16px;background:#a02c2c"></i><i style="left:952px;top:988px;width:21px;height:16px;background:#89a02c"></i><i style="left:974px;top:971px;width:21px;height:16px;background:#c83737"></i><i style="left:974px;top:988px;width:21px;height:16px;background:#abc837"></i><i style="left:996px;top:971px;width:21px;height:16px;background:#d35f5f"></i><i style="left:996px;top:988px;width:21px;height:16px;background:#bcd35f"></i><i style="left:1018px;top:971px;width:21px;height:16px;background:#de8787"></i><i style="left:1018px;top:988px;width:21px;height:16px;background:#cdde87"></i><i style="left:1040px;top:971px;width:21px;height:16px;background:#e9afaf"></i><i style="left:1040px;top:988px;width:21px;height:16px;background:#dde9af"></i><i style="left:1062px;top:971px;width:21px;height:16px;background:#f4d7d7"></i><i style="left:1062px;top:988px;width:21px;height:16px;background:#eef4d7"></i><i style="left:1084px;top:971px;width:21px;height:16px;background:#241c1c"></i><i style="left:1084px;top:988px;width:21px;height:16px;background:#22241c"></i><i style="left:1106px;top:971px;width:21px;height:16px;background:#483737"></i><i style="left:1106px;top:988px;width:21px;height:16px;background:#454837"></i><i style="left:1128px;top:971px;width:21px;height:16px;background:#6c5353"></i><i style="left:1128px;top:988px;width:21px;height:16px;background:#676c53"></i><i style="left:1150px;top:971px;width:21px;height:16px;background:#916f6f"></i><i style="left:1150px;top:988px;width:21px;height:16px;background:#8a916f"></i><i style="left:1172px;top:971px;width:21px;height:16px;background:#ac9393"></i><i style="left:1172px;top:988px;width:21px;height:16px;background:#a7ac93"></i><i style="left:1194px;top:971px;width:21px;height:16px;background:#c8b7b7"></i><i style="left:1194px;top:988px;width:21px;height:16px;background:#c4c8b7"></i><i style="left:1216px;top:971px;width:21px;height:16px;background:#e3dbdb"></i><i style="left:1216px;top:988px;width:21px;height:16px;background:#e2e3db"></i><i style="left:1238px;top:971px;width:21px;height:16px;background:#2b1100"></i><i style="left:1238px;top:988px;width:21px;height:16px;background:#112b00"></i><i style="left:1260px;top:971px;width:21px;height:16px;background:#552200"></i><i style="left:1260px;top:988px;width:21px;height:16px;background:#225500"></i><i style="left:1282px;top:971px;width:21px;height:16px;background:#803300"></i><i style="left:1282px;top:988px;width:21px;height:16px;background:#338000"></i><i style="left:1304px;top:971px;width:21px;height:16px;background:#aa4400"></i><i style="left:1304px;top:988px;width:21px;height:16px;background:#44aa00"></i><i style="left:1326px;top:971px;width:21px;height:16px;background:#d45500"></i><i style="left:1326px;top:988px;width:21px;height:16px;background:#55d400"></i><i style="left:1348px;top:971px;width:21px;height:16px;background:#ff6600"></i><i style="left:1348px;top:988px;width:21px;height:16px;background:#66ff00"></i><i style="left:1370px;top:971px;width:21px;height:16px;background:#ff7f2a"></i><i style="left:1370px;top:988px;width:21px;height:16px;background:#7fff2a"></i><i style="left:1392px;top:971px;width:21px;height:16px;background:#ff9955"></i><i style="left:1392px;top:988px;width:21px;height:16px;background:#99ff55"></i><i style="left:1414px;top:971px;width:21px;height:16px;background:#ffb380"></i><i style="left:1414px;top:988px;width:21px;height:16px;background:#b3ff80"></i><i style="left:1436px;top:971px;width:21px;height:16px;background:#ffccaa"></i><i style="left:1436px;top:988px;width:21px;height:16px;background:#ccffaa"></i><i style="left:1458px;top:971px;width:21px;height:16px;background:#ffe6d5"></i><i style="left:1458px;top:988px;width:21px;height:16px;background:#e5ffd5"></i><i style="left:1480px;top:971px;width:21px;height:16px;background:#28170b"></i><i style="left:1480px;top:988px;width:21px;height:16px;background:#17280b"></i><i style="left:1502px;top:971px;width:21px;height:16px;background:#502d16"></i><i style="left:1502px;top:988px;width:21px;height:16px;background:#2d5016"></i><i style="left:1524px;top:971px;width:21px;height:16px;background:#784421"></i><i style="left:1524px;top:988px;width:21px;height:16px;background:#447821"></i><i style="left:1546px;top:971px;width:21px;height:16px;background:#a05a2c"></i><i style="left:1546px;top:988px;width:21px;height:16px;background:#5aa02c"></i><i style="left:1568px;top:971px;width:21px;height:16px;background:#c87137"></i><i style="left:1568px;top:988px;width:21px;height:16px;background:#71c837"></i><i style="left:1590px;top:971px;width:21px;height:16px;background:#d38d5f"></i><i style="left:1590px;top:988px;width:21px;height:16px;background:#8dd35f"></i><i style="left:1612px;top:971px;width:21px;height:16px;background:#deaa87"></i><i style="left:1612px;top:988px;width:21px;height:16px;background:#aade87"></i><i style="left:1634px;top:971px;width:21px;height:16px;background:#e9c6af"></i><i style="left:1634px;top:988px;width:21px;height:16px;background:#c6e9af"></i><i style="left:1656px;top:971px;width:21px;height:16px;background:#f4e3d7"></i><i style="left:1656px;top:988px;width:21px;height:16px;background:#e3f4d7"></i><i style="left:1678px;top:971px;width:21px;height:16px;background:#241f1c"></i><i style="left:1678px;top:988px;width:21px;height:16px;background:#1f241c"></i><i style="left:1700px;top:971px;width:21px;height:16px;background:#483e37"></i><i style="left:1700px;top:988px;width:21px;height:16px;background:#3e4837"></i><i style="left:1722px;top:971px;width:21px;height:16px;background:#6c5d53"></i><i style="left:1722px;top:988px;width:21px;height:16px;background:#5d6c53"></i><i style="left:1744px;top:971px;width:21px;height:16px;background:#917c6f"></i><i style="left:1744px;top:988px;width:21px;height:16px;background:#7c916f"></i><i style="left:1766px;top:971px;width:21px;height:16px;background:#ac9d93"></i><i style="left:1766px;top:988px;width:21px;height:16px;background:#9dac93"></i><i style="left:1788px;top:971px;width:21px;height:16px;background:#c8beb7"></i><i style="left:1788px;top:988px;width:21px;height:16px;background:#bec8b7"></i><i style="left:1810px;top:971px;width:21px;height:16px;background:#e3dedb"></i><i style="left:1810px;top:988px;width:21px;height:16px;background:#dee3db"></i><i style="left:1832px;top:971px;width:21px;height:16px;background:#2b2200"></i><i style="left:1832px;top:988px;width:21px;height:16px;background:#002b00"></i></div>
<div style="left:1px;top:971px;width:33px;height:33px;background:#fff"></div>
<svg style="left:1px;top:971px" width="33" height="33"><path d="M3.5,3.5 L29.5,29.5 M29.5,3.5 L3.5,29.5" stroke="#cc1f3a" stroke-width="2.9" stroke-linecap="round"/></svg>
<svg style="left:1855px;top:978px" width="65" height="24"><path d="M3.2,12.8 L9.2,6.6 L15.2,12.8" stroke="#8a8a8a" stroke-width="2.1" fill="none"/><path d="M26,5.4 L32,11.6 L38,5.4" stroke="#eee" stroke-width="2.2" fill="none"/><path d="M47,8 h14 M47,13 h14 M47,18 h14" stroke="#eee" stroke-width="2.2"/></svg>
<div class="t" id="t38" style="left:19.5px;top:1007.54px;font-size:13.4px;color:#e4e4e4;letter-spacing:-0.245px;">Fond :</div>
<div class="t" id="t39" style="left:0.5px;top:1024.44px;font-size:13.4px;color:#e4e4e4;letter-spacing:0.045px;">Contour :</div>
<div class="t" id="t40" style="left:89px;top:1007.54px;font-size:13.4px;color:#e4e4e4;letter-spacing:-0.109px;">N/A</div>
<div class="t" id="t41" style="left:89px;top:1024.44px;font-size:13.4px;color:#e4e4e4;letter-spacing:-0.109px;">N/A</div>
<div class="t" id="t42" style="left:174.5px;top:1016.18px;font-size:14.2px;color:#e4e4e4;letter-spacing:-1.141px;">O :</div>
<div style="left:195px;top:1006px;width:71px;height:37px;box-sizing:border-box;border:1px solid #1d1d1d;border-radius:6px;background:#303030"></div>
<div style="left:231px;top:1007px;width:1px;height:35px;background:#2a2a2a;"></div>
<div style="left:249px;top:1007px;width:1px;height:35px;background:#2a2a2a;"></div>
<div class="t" id="t43" style="left:202px;top:1016.43px;font-size:13.9px;color:#8a8a8a;letter-spacing:-0.229px;">100</div>
<svg style="left:195px;top:1006px" width="71" height="37"><path d="M40.0,18.5 h11 M56.5,18.5 h11 M62.0,13.0 v11" stroke="#5c5c5c" stroke-width="1.9" fill="none"/></svg>
<div style="left:277px;top:1015px;width:3px;height:17px;background:#3f84f0;"></div>
<div class="t" id="t44" style="left:286px;top:1016.18px;font-size:14.2px;color:#e9e9e9;letter-spacing:-0.833px;">Layer 1</div>
<div style="left:412px;top:1008px;width:1px;height:30px;background:#2e2e2e;"></div>
<div class="t" id="t45" style="left:419.5px;top:1016.44px;font-size:13.4px;color:#e6e6e6;letter-spacing:-0.052px;">Aucun objet sélectionné. Sélectionnez des objets par Clic, Maj+Clic ou Alt+molette, ou cliquez-déplacez autour des objets à sélectionner.</div>
<svg style="left:1494px;top:1014px" width="16" height="18"><path d="M3,9 L10,3.5 L10,14.5 Z" fill="#7a7a7a"/></svg>
<div style="left:1520px;top:1006px;width:36px;height:37px;box-sizing:border-box;border:1px solid #1d1d1d;border-radius:6px;background:#303030"></div>
<svg style="left:1520px;top:1007px" width="36" height="33"><path d="M12,13 L24,13 L18,19.5 Z" fill="#8a8a8a"/></svg>
<svg style="left:1566px;top:1014px" width="16" height="18"><path d="M13,9 L6,3.5 L6,14.5 Z" fill="#7a7a7a"/></svg>
<div style="left:1592px;top:1008px;width:1px;height:30px;background:#2e2e2e;"></div>
<div class="t" id="t46" style="left:1599.5px;top:1007.18px;font-size:14.2px;color:#e4e4e4;letter-spacing:-1.286px;">X :</div>
<div class="t" id="t47" style="left:1599.5px;top:1023.68px;font-size:14.2px;color:#e4e4e4;letter-spacing:-1.198px;">Y :</div>
<div class="t" id="t48" style="left:1629.5px;top:1007.18px;font-size:14.2px;color:#e4e4e4;letter-spacing:-0.403px;">33,57</div>
<div class="t" id="t49" style="left:1629.5px;top:1023.68px;font-size:14.2px;color:#e4e4e4;letter-spacing:-0.403px;">61,18</div>
<div class="t" id="t50" style="left:1676px;top:1016.18px;font-size:14.2px;color:#e4e4e4;letter-spacing:-0.854px;">Z :</div>
<div style="left:1694px;top:1006px;width:90px;height:37px;box-sizing:border-box;border:1px solid #1d1d1d;border-radius:6px;background:#303030"></div>
<div style="left:1749px;top:1007px;width:1px;height:35px;background:#2a2a2a;"></div>
<div style="left:1766px;top:1007px;width:1px;height:35px;background:#2a2a2a;"></div>
<div class="t" id="t51" style="left:1704.5px;top:1016.43px;font-size:13.9px;color:#e6e6e6;letter-spacing:-0.133px;">522%</div>
<svg style="left:1694px;top:1006px" width="90" height="37"><path d="M58.5,18.5 h11 M75.0,18.5 h11 M80.5,13.0 v11" stroke="#e6e6e6" stroke-width="1.9" fill="none"/></svg>
<div class="t" id="t52" style="left:1794.5px;top:1016.18px;font-size:14.2px;color:#e4e4e4;letter-spacing:-1.380px;">R :</div>
<div style="left:1812px;top:1006px;width:98px;height:37px;box-sizing:border-box;border:1px solid #1d1d1d;border-radius:6px;background:#303030"></div>
<div style="left:1875px;top:1007px;width:1px;height:35px;background:#2a2a2a;"></div>
<div style="left:1892px;top:1007px;width:1px;height:35px;background:#2a2a2a;"></div>
<div class="t" id="t53" style="left:1828px;top:1016.43px;font-size:13.9px;color:#e6e6e6;letter-spacing:-0.119px;">0,00°</div>
<svg style="left:1812px;top:1006px" width="98" height="37"><path d="M66.5,18.5 h11 M83.0,18.5 h11 M88.5,13.0 v11" stroke="#e6e6e6" stroke-width="1.9" fill="none"/></svg>
<svg style="left:0;top:0" width="36" height="900"><defs><linearGradient id="gg" x1="0" y1="0" x2="1" y2="1"><stop offset="0" stop-color="#0d93e6"/><stop offset="0.55" stop-color="#63baf0"/><stop offset="1" stop-color="#d9eefb"/></linearGradient><radialGradient id="mg" cx="0.5" cy="0.5" r="0.5"><stop offset="0" stop-color="#1a96e6"/><stop offset="0.45" stop-color="#176ca6"/><stop offset="1" stop-color="#333a40" stop-opacity="0.3"/></radialGradient></defs><path d="M8.7,104.7 L8.7,122.3 L13.3,118.6 L16.5,125 L21.7,122.6 L18.8,116.6 L26,114.3 Z" fill="none" stroke="#e9e9e9" stroke-width="2.8" stroke-linejoin="round"/><rect x="9.4" y="138.4" width="6.2" height="6.2" fill="none" stroke="#e9e9e9" stroke-width="2.9"/><path d="M17.6,138.7 Q21,136.7 26,136.2 M9.5,147 Q7.4,150.3 6.8,154.8" fill="none" stroke="#b0b0b0" stroke-width="1.5"/><path d="M20,147.3 L27.2,151.6 L20,156.2 L21.9,151.7 Z" fill="#e9e9e9"/><circle cx="13.7" cy="174.7" r="6.2" fill="none" stroke="#e9e9e9" stroke-width="2.6"/><rect x="15.2" y="176" width="11.4" height="11.3" fill="none" stroke="#e9e9e9" stroke-width="2.4"/><rect x="8" y="204" width="18" height="18" rx="1.6" fill="#ff1691" stroke="#e9e9e9" stroke-width="3"/><circle cx="16.8" cy="245" r="8.9" fill="#c61f79" stroke="#e9e9e9" stroke-width="3.1"/><path d="M13.5,268 L5.8,273.6 L8.7,282.3 L17.5,282.3 L21.2,273.4 Z" fill="#8c1f5d" stroke="#e9e9e9" stroke-width="2.1" stroke-linejoin="round"/><polygon points="21.60,272.40 23.60,277.25 28.83,277.65 24.83,281.05 26.07,286.15 21.60,283.40 17.13,286.15 18.37,281.05 14.37,277.65 19.60,277.25" fill="#5b2150" stroke="#e9e9e9" stroke-width="2" stroke-linejoin="round"/><path d="M17,297 L27.6,303 L27.6,315.2 L17,321.2 L6.2,315.2 L6.2,303 Z" fill="#e9e9e9"/><path d="M17,300.4 L22.7,303.6 L17,306.9 L11.3,303.6 Z" fill="#4e2147"/><path d="M9,306.6 L15.6,310.2 L15.6,317.2 L9,313.6 Z" fill="#ff1691"/><path d="M18.5,310.2 L25,306.6 L25,313.6 L18.5,317.2 Z" fill="#8c1f5d"/><path d="M16.85,342.39 L16.93,342.57 L16.99,342.77 L17.00,342.99 L16.98,343.23 L16.91,343.47 L16.80,343.71 L16.64,343.94 L16.43,344.15 L16.19,344.33 L15.90,344.48 L15.58,344.58 L15.23,344.63 L14.87,344.63 L14.49,344.56 L14.12,344.44 L13.76,344.25 L13.42,344.00 L13.11,343.68 L12.84,343.32 L12.63,342.90 L12.48,342.44 L12.40,341.95 L12.39,341.44 L12.47,340.92 L12.63,340.40 L12.87,339.90 L13.19,339.42 L13.59,338.99 L14.06,338.62 L14.59,338.31 L15.18,338.08 L15.81,337.94 L16.47,337.90 L17.14,337.95 L17.82,338.11 L18.47,338.37 L19.10,338.74 L19.67,339.20 L20.17,339.75 L20.60,340.39 L20.94,341.10 L21.17,341.86 L21.28,342.66 L21.28,343.49 L21.15,344.32 L20.90,345.13 L20.52,345.92 L20.02,346.65 L19.41,347.31 L18.69,347.88 L17.89,348.35 L17.01,348.70 L16.07,348.92 L15.10,349.00 L14.11,348.93 L13.13,348.72 L12.17,348.35 L11.27,347.85 L10.44,347.20 L9.70,346.43 L9.07,345.55 L8.58,344.57 L8.23,343.51 L8.04,342.40 L8.01,341.26 L8.15,340.11 L8.47,338.98 L8.95,337.90 L9.60,336.89 L10.39,335.97 L11.33,335.16 L12.39,334.50 L13.54,333.99 L14.78,333.66 L16.06,333.51 L17.37,333.54 L18.67,333.78 L19.94,334.20 L21.14,334.82 L22.26,335.61 L23.25,336.57 L24.11,337.68 L24.80,338.91 L25.30,340.25 L25.61,341.66 L25.71,343.12 L25.59,344.59 L25.25,346.04 L24.70,347.44 L23.95,348.75" fill="none" stroke="#e9e9e9" stroke-width="2.9" stroke-linecap="butt"/><circle cx="8" cy="367.2" r="3.1" fill="#0a9d0a"/><path d="M8,367 V378" stroke="#0a9d0a" stroke-width="1.7"/><rect x="5" y="377.4" width="6.1" height="6.3" fill="#0a9d0a"/><path d="M9.4,376 Q12,367.6 22.6,366" fill="none" stroke="#b8b8b8" stroke-width="1.1"/><path d="M12.4,387.6 L15.2,376.8 L24.6,371.4 L29,375.6 L24.4,385 Z" fill="#e9e9e9"/><path d="M13.6,386.4 L19.6,380.2" stroke="#353535" stroke-width="1.2"/><path d="M20.5,376.8 L22.9,379.2 L20.5,381.6 L18.1,379.2 Z" fill="#353535"/><path d="M6.2,401 C6.2,397 10.4,396.4 11.6,399.6 C12.6,402.4 14.6,402 15.6,399.6 C16.6,397.6 18.8,398 18.2,400.6 C17.6,403.6 14,404.4 11.4,405.6 C8.6,407 7.6,408.6 7.6,410.6" fill="none" stroke="#0a9d0a" stroke-width="1.5" stroke-linecap="round"/><path d="M14.2,413.1 L21.9,404.8" stroke="#e9e9e9" stroke-width="5.2"/><path d="M23.7,402.9 L25,401.5" stroke="#e9e9e9" stroke-width="5.2"/><path d="M25,401.5 L26.2,400.2" stroke="#e9e9e9" stroke-width="5.2" stroke-linecap="round"/><path d="M8.4,419.2 L10.2,413 L14.4,416.9 Z" fill="#0a9d0a"/><path d="M11,429.8 C15.6,432 15.2,436.6 11.6,437 C8.4,437.4 6.4,439 7.8,441.6" fill="none" stroke="#0a9d0a" stroke-width="1.6" stroke-linecap="round"/><path d="M15.6,440.2 L18.7,443.3 L28.3,431 L27.2,430.4 Z" fill="#e9e9e9"/><path d="M13.3,442.4 L14.9,440.8 L18.1,444 L16.5,445.6 Z" fill="#e9e9e9"/><path d="M6.4,449.8 C8.5,446.5 10.5,445 13,445.2 C14.2,447.6 11.5,450.2 6.4,449.8 Z" fill="#0a9d0a"/><path fill-rule="evenodd" d="M4.8,481 L11.3,464.3 L16.9,464.3 L23.4,481 L18.7,481 L17.5,477.5 L10.6,477.5 L9.4,481 Z M11.8,473.9 L16.3,473.9 L14.05,467.5 Z" fill="#e9e9e9"/><rect x="26" y="460" width="3" height="24" fill="#0a9d0a"/><rect x="5.7" y="495.7" width="22.6" height="22.6" rx="1.6" fill="none" stroke="#e9e9e9" stroke-width="1.5"/><rect x="8" y="498" width="18" height="18" fill="url(#gg)"/><path d="M26,510 L26,516 L20,516 Z" fill="#e9e9e9"/><rect x="6" y="528" width="22" height="22" fill="url(#mg)"/><rect x="5.7" y="527.7" width="22.6" height="22.6" rx="1.6" fill="none" stroke="#e9e9e9" stroke-width="1.5"/><path d="M17,539 C13.5,536 13.5,531 17,528.4 M17,539 C20,535.5 25,535.5 27.6,539 M17,539 C20.5,542 20.5,547 17,549.6 M17,539 C14,542.5 9,542.5 6.4,539" fill="none" stroke="#e9e9e9" stroke-width="1.8"/><path d="M10,560.6 C8.5,563.2 6.2,566.2 6.2,568.4 A3.9,3.9 0 0 0 14,568.4 C14,566.2 11.5,563.2 10,560.6 Z" fill="#1a96e6"/><path d="M10.6,581 L19.6,572" stroke="#e9e9e9" stroke-width="4.6" stroke-linecap="round"/><path d="M10.8,580.8 L19,572.6" stroke="#353535" stroke-width="1.7" stroke-linecap="round"/><path d="M21.6,570 L26.4,565.2" stroke="#e9e9e9" stroke-width="5.6" stroke-linecap="round"/><path d="M17.6,567.4 L24.2,574" stroke="#e9e9e9" stroke-width="3.2"/><path d="M10,609.9 C8.5,607.2 6.3,604 6.3,611 Z" fill="none"/><path d="M10,604.3 C8.5,606.7 6.2,609.4 6.2,611.4 A3.9,3.9 0 0 0 14,611.4 C14,609.4 11.5,606.7 10,604.3 Z" fill="#1a96e6"/><path d="M11.4,602.4 L20.4,593.8 L28.6,601.6 L20.4,609.9 Z" fill="#e9e9e9"/><path d="M15.4,600.6 L21.4,595.8 L25.6,600.6 Z" fill="#353535"/><path d="M12,602 L23.2,592" stroke="#e9e9e9" stroke-width="1.9"/><path d="M6.5,648 L6.5,640.5 L10.8,640.5 C12.6,634.5 16.4,629.2 21.6,629.2 C25.6,629.4 25.6,633 23.8,633.8 C21.6,632.8 19.4,634.8 20.6,637.2 C21.8,639.4 25,640.4 27.5,639.6 L27.5,648 Z" fill="#e9e9e9"/><rect x="14" y="670.6" width="13.6" height="10.6" rx="1.4" fill="#e9e9e9"/><path d="M15,669.3 L17.6,666.3 L24.2,666.3 L26.8,669.3 Z" fill="#e9e9e9"/><rect x="19" y="661.3" width="4.6" height="3.2" rx="0.8" fill="#e9e9e9"/><circle cx="10.5" cy="661" r="1.4" fill="#9a9a9a"/><circle cx="14.6" cy="661.6" r="1" fill="#9a9a9a"/><circle cx="8" cy="664.6" r="1.6" fill="#9a9a9a"/><circle cx="12.4" cy="664.4" r="1.1" fill="#9a9a9a"/><circle cx="10" cy="669.6" r="2" fill="#9a9a9a"/><circle cx="14" cy="667" r="1.1" fill="#9a9a9a"/><circle cx="16.4" cy="663.4" r="0.8" fill="#9a9a9a"/><path d="M21.5,691.4 L27.6,697.5 L21,704.1 L14.9,698 Z" fill="#e9e9e9"/><path d="M13.3,699.6 L19.4,705.7 L15,709.4 L9.4,703.6 Z" fill="#8c8c8c"/><rect x="6.4" y="709.8" width="4.6" height="2.6" rx="0.8" fill="#e9e9e9"/><rect x="18.6" y="709.8" width="9.4" height="2.6" rx="0.8" fill="#e9e9e9"/><path d="M6.4,726.6 C12.5,726 14.2,730 15.6,733.6 C17,737.4 18.6,738.4 21.5,738.3" fill="none" stroke="#e9e9e9" stroke-width="3.1"/><path d="M20,731.6 L27.4,737.8 L20.2,744.6 Z" fill="#e9e9e9"/><path d="M7,770 H27" stroke="#8c8c8c" stroke-width="1"/><path d="M17,767.8 L19.2,770 L17,772.2 L14.8,770 Z" fill="#8c8c8c"/><circle cx="17" cy="760.4" r="2.9" fill="none" stroke="#e9e9e9" stroke-width="2"/><rect x="16" y="755" width="2" height="2.6" fill="#e9e9e9"/><path d="M13.4,762.4 L15.6,764.2 L12.4,772.6 L11,776.8 L10,776.6 L10.2,771.6 Z M20.6,762.4 L18.4,764.2 L21.6,772.6 L23,776.8 L24,776.6 L23.8,771.6 Z" fill="#e9e9e9"/><path d="M9.2,791.7 H20 Q23.3,791.7 23.3,795 V810.3 H9.2 Z" fill="none" stroke="#e9e9e9" stroke-width="2.4" stroke-linejoin="round"/><path d="M10.4,797.2 H15.8 M10.4,800.4 H13.2 M10.4,803.6 H15.8 M10.4,806.8 H13.2" stroke="#e9e9e9" stroke-width="1.3"/><circle cx="16.4" cy="832.3" r="8.1" fill="none" stroke="#e9e9e9" stroke-width="2.4"/><path d="M22.4,838.6 L27,843.4" stroke="#e9e9e9" stroke-width="3" stroke-linecap="round"/><path d="M6.2,858.8 H15.6 L20.3,863.5 V875.8 H6.2 Z" fill="none" stroke="#e9e9e9" stroke-width="2.4" stroke-linejoin="round"/><path d="M15.2,859 V864 H20" fill="none" stroke="#e9e9e9" stroke-width="1.6"/><path d="M13.4,855.2 H23.6 Q27.6,855.2 27.6,859.2 V871 H23.6" fill="none" stroke="#e9e9e9" stroke-width="2.4"/></svg>
<svg style="left:0;top:56px" width="620" height="42" viewBox="0 56 620 42"><g fill="#e9e9e9"><rect x="14.00" y="65" width="1.65" height="1.65"/><rect x="14.00" y="86.35" width="1.65" height="1.65"/><rect x="17.05" y="65" width="1.65" height="1.65"/><rect x="17.05" y="86.35" width="1.65" height="1.65"/><rect x="20.10" y="65" width="1.65" height="1.65"/><rect x="20.10" y="86.35" width="1.65" height="1.65"/><rect x="23.15" y="65" width="1.65" height="1.65"/><rect x="23.15" y="86.35" width="1.65" height="1.65"/><rect x="26.20" y="65" width="1.65" height="1.65"/><rect x="26.20" y="86.35" width="1.65" height="1.65"/><rect x="29.25" y="65" width="1.65" height="1.65"/><rect x="29.25" y="86.35" width="1.65" height="1.65"/><rect x="32.30" y="65" width="1.65" height="1.65"/><rect x="32.30" y="86.35" width="1.65" height="1.65"/><rect x="35.35" y="65" width="1.65" height="1.65"/><rect x="35.35" y="86.35" width="1.65" height="1.65"/><rect x="14" y="68.05" width="1.65" height="1.65"/><rect x="35.35" y="68.05" width="1.65" height="1.65"/><rect x="14" y="71.10" width="1.65" height="1.65"/><rect x="35.35" y="71.10" width="1.65" height="1.65"/><rect x="14" y="74.15" width="1.65" height="1.65"/><rect x="35.35" y="74.15" width="1.65" height="1.65"/><rect x="14" y="77.20" width="1.65" height="1.65"/><rect x="35.35" y="77.20" width="1.65" height="1.65"/><rect x="14" y="80.25" width="1.65" height="1.65"/><rect x="35.35" y="80.25" width="1.65" height="1.65"/><rect x="14" y="83.30" width="1.65" height="1.65"/><rect x="35.35" y="83.30" width="1.65" height="1.65"/></g><circle cx="28.1" cy="73.9" r="5.4" fill="#e9e9e9"/><path d="M17,77 H22.4 A6,6 0 0 0 29,81 V84.6 H17 Z" fill="#e9e9e9"/><g fill="#e9e9e9"><rect x="63.00" y="65" width="1.65" height="1.65"/><rect x="63.00" y="86.35" width="1.65" height="1.65"/><rect x="66.05" y="65" width="1.65" height="1.65"/><rect x="66.05" y="86.35" width="1.65" height="1.65"/><rect x="69.10" y="65" width="1.65" height="1.65"/><rect x="69.10" y="86.35" width="1.65" height="1.65"/><rect x="72.15" y="65" width="1.65" height="1.65"/><rect x="72.15" y="86.35" width="1.65" height="1.65"/><rect x="75.20" y="65" width="1.65" height="1.65"/><rect x="75.20" y="86.35" width="1.65" height="1.65"/><rect x="78.25" y="65" width="1.65" height="1.65"/><rect x="78.25" y="86.35" width="1.65" height="1.65"/><rect x="81.30" y="65" width="1.65" height="1.65"/><rect x="81.30" y="86.35" width="1.65" height="1.65"/><rect x="84.35" y="65" width="1.65" height="1.65"/><rect x="84.35" y="86.35" width="1.65" height="1.65"/><rect x="63" y="68.05" width="1.65" height="1.65"/><rect x="84.35" y="68.05" width="1.65" height="1.65"/><rect x="63" y="71.10" width="1.65" height="1.65"/><rect x="84.35" y="71.10" width="1.65" height="1.65"/><rect x="63" y="74.15" width="1.65" height="1.65"/><rect x="84.35" y="74.15" width="1.65" height="1.65"/><rect x="63" y="77.20" width="1.65" height="1.65"/><rect x="84.35" y="77.20" width="1.65" height="1.65"/><rect x="63" y="80.25" width="1.65" height="1.65"/><rect x="84.35" y="80.25" width="1.65" height="1.65"/><rect x="63" y="83.30" width="1.65" height="1.65"/><rect x="84.35" y="83.30" width="1.65" height="1.65"/></g><path d="M69.8,68.6 H83.4 L79.6,73.0 H66 Z" fill="#cfcfcf"/><path d="M69.8,74.6 H83.4 L79.6,79.0 H66 Z" fill="#cfcfcf"/><path d="M69.8,80.6 H83.4 L79.6,85.0 H66 Z" fill="#cfcfcf"/><g fill="#4f4f4f"><rect x="112.00" y="65" width="1.65" height="1.65"/><rect x="112.00" y="86.35" width="1.65" height="1.65"/><rect x="115.05" y="65" width="1.65" height="1.65"/><rect x="115.05" y="86.35" width="1.65" height="1.65"/><rect x="118.10" y="65" width="1.65" height="1.65"/><rect x="118.10" y="86.35" width="1.65" height="1.65"/><rect x="121.15" y="65" width="1.65" height="1.65"/><rect x="121.15" y="86.35" width="1.65" height="1.65"/><rect x="124.20" y="65" width="1.65" height="1.65"/><rect x="124.20" y="86.35" width="1.65" height="1.65"/><rect x="127.25" y="65" width="1.65" height="1.65"/><rect x="127.25" y="86.35" width="1.65" height="1.65"/><rect x="130.30" y="65" width="1.65" height="1.65"/><rect x="130.30" y="86.35" width="1.65" height="1.65"/><rect x="133.35" y="65" width="1.65" height="1.65"/><rect x="133.35" y="86.35" width="1.65" height="1.65"/><rect x="112" y="68.05" width="1.65" height="1.65"/><rect x="133.35" y="68.05" width="1.65" height="1.65"/><rect x="112" y="71.10" width="1.65" height="1.65"/><rect x="133.35" y="71.10" width="1.65" height="1.65"/><rect x="112" y="74.15" width="1.65" height="1.65"/><rect x="133.35" y="74.15" width="1.65" height="1.65"/><rect x="112" y="77.20" width="1.65" height="1.65"/><rect x="133.35" y="77.20" width="1.65" height="1.65"/><rect x="112" y="80.25" width="1.65" height="1.65"/><rect x="133.35" y="80.25" width="1.65" height="1.65"/><rect x="112" y="83.30" width="1.65" height="1.65"/><rect x="133.35" y="83.30" width="1.65" height="1.65"/></g><circle cx="126.1" cy="73.9" r="5.4" fill="#565656"/><path d="M115,77 H120.4 A6,6 0 0 0 127,81 V84.6 H115 Z" fill="#565656"/><rect x="163" y="72" width="15.4" height="15.4" fill="none" stroke="#e9e9e9" stroke-width="2" stroke-dasharray="2.6,2.5" stroke-dashoffset="1.3"/><rect x="176" y="66.2" width="8" height="8" fill="#e9e9e9"/><rect x="232.3" y="65" width="7.7" height="14.8" fill="#5c5c5c"/><rect x="215.8" y="81.6" width="15.2" height="7.2" fill="#838383"/><path d="M229.6,68 C224.5,68.2 222,71 221.8,75.5" fill="none" stroke="#1b6b22" stroke-width="2.6"/><path d="M217.6,74.2 H226 L221.8,78.6 Z" fill="#1b6b22"/><rect x="264.8" y="65" width="7.9" height="14.8" fill="#5c5c5c"/><rect x="274" y="81.6" width="15.1" height="7.2" fill="#838383"/><path d="M275.4,68 C280.5,68.2 283,71 283.2,75.5" fill="none" stroke="#1b6b22" stroke-width="2.6"/><path d="M279,74.2 H287.4 L283.2,78.6 Z" fill="#1b6b22"/><path d="M324.6,69 L324.6,84.6 L315.6,84.6 Z" fill="#5c5c5c"/><path d="M329,69 L329,84.6 L338.2,84.6 Z" fill="#838383"/><path d="M326.8,66 V88.4" stroke="#a2a2a2" stroke-width="1.6" stroke-dasharray="2.6,1.4"/><path d="M367.2,66.8 L367.2,75.4 L383,75.4 Z" fill="#5c5c5c"/><path d="M367.2,80 L383,80 L367.2,89 Z" fill="#838383"/><path d="M364,77.8 H386.2" stroke="#a2a2a2" stroke-width="1.6" stroke-dasharray="2.6,1.4"/><rect x="419.5" y="66.4" width="19.6" height="3.1" fill="#ababab"/><rect x="419.5" y="72.5" width="7.6" height="3.1" fill="#6c6c6c"/><rect x="419.5" y="78.5" width="7.6" height="3.1" fill="#6c6c6c"/><rect x="419.5" y="84.5" width="7.6" height="3.1" fill="#6c6c6c"/><path d="M434.5,87.6 V76" stroke="#1b6b22" stroke-width="3"/><path d="M430,77.6 L434.5,72.8 L439,77.6 Z" fill="#1b6b22"/><rect x="468.5" y="66.4" width="7.6" height="3.1" fill="#6c6c6c"/><rect x="468.5" y="72.5" width="19.6" height="3.1" fill="#ababab"/><rect x="468.5" y="78.5" width="7.6" height="3.1" fill="#6c6c6c"/><rect x="468.5" y="84.5" width="7.6" height="3.1" fill="#6c6c6c"/><path d="M483.5,87.6 V80" stroke="#1b6b22" stroke-width="3"/><path d="M479,81.6 L483.5,76.8 L488,81.6 Z" fill="#1b6b22"/><rect x="517.5" y="66.4" width="7.6" height="3.1" fill="#6c6c6c"/><rect x="517.5" y="72.5" width="7.6" height="3.1" fill="#6c6c6c"/><rect x="517.5" y="78.5" width="19.6" height="3.1" fill="#ababab"/><rect x="517.5" y="84.5" width="7.6" height="3.1" fill="#6c6c6c"/><path d="M532.5,66.4 V73" stroke="#1b6b22" stroke-width="3"/><path d="M528,72 L532.5,76.8 L537,72 Z" fill="#1b6b22"/><rect x="566.5" y="66.4" width="7.6" height="3.1" fill="#6c6c6c"/><rect x="566.5" y="72.5" width="7.6" height="3.1" fill="#6c6c6c"/><rect x="566.5" y="78.5" width="7.6" height="3.1" fill="#6c6c6c"/><rect x="566.5" y="84.5" width="19.6" height="3.1" fill="#ababab"/><path d="M581.5,66.4 V77.4" stroke="#1b6b22" stroke-width="3"/><path d="M577,76.4 L581.5,81.2 L586,76.4 Z" fill="#1b6b22"/></svg>
<svg style="left:1300px;top:56px" width="200" height="42" viewBox="1300 56 200 42"><defs><linearGradient id="bg3" x1="0" y1="0" x2="1" y2="0"><stop offset="0" stop-color="#0d93e6"/><stop offset="0.15" stop-color="#0d93e6"/><stop offset="0.8" stop-color="#b5def5"/><stop offset="0.82" stop-color="#ececec"/><stop offset="1" stop-color="#ececec"/></linearGradient></defs><rect x="1318.9" y="82.8" width="3" height="3.3" fill="#ececec"/><rect x="1323.4" y="82.8" width="3.2" height="3.3" fill="#ececec"/><path d="M1328.1,82.8 H1332.3 V80 L1337.1,84.45 L1332.3,89 V86.1 H1328.1 Z" fill="#ececec"/><path d="M1319.0,67.6 H1335.6 V77.1" fill="none" stroke="#ececec" stroke-width="3"/><path d="M1319.0,73.2 H1330.3 V77.1" fill="none" stroke="#ececec" stroke-width="1.6"/><rect x="1367.9" y="82.8" width="3" height="3.3" fill="#ececec"/><rect x="1372.4" y="82.8" width="3.2" height="3.3" fill="#ececec"/><path d="M1377.1,82.8 H1381.3 V80 L1386.1,84.45 L1381.3,89 V86.1 H1377.1 Z" fill="#ececec"/><path d="M1369.5,67.7 H1377.0 Q1384.8,67.7 1385.1,76" fill="none" stroke="#ececec" stroke-width="3" stroke-linecap="round"/><path d="M1369.1,73.2 H1375.1 Q1379.7,73.2 1380.1,78" fill="none" stroke="#ececec" stroke-width="1.6" stroke-linecap="round"/><rect x="1416.9" y="82.8" width="3" height="3.3" fill="#ececec"/><rect x="1421.4" y="82.8" width="3.2" height="3.3" fill="#ececec"/><path d="M1426.1,82.8 H1430.3 V80 L1435.1,84.45 L1430.3,89 V86.1 H1426.1 Z" fill="#ececec"/><path d="M1416.9,67.2 H1434.1 V78.7" fill="none" stroke="#ececec" stroke-width="1.6"/><path d="M1416.9,77.8 H1428.2 V79.8" fill="none" stroke="#ececec" stroke-width="1.4"/><rect x="1416.9" y="69.3" width="14.9" height="6.5" fill="url(#bg3)"/><rect x="1465.9" y="82.8" width="3" height="3.3" fill="#ececec"/><rect x="1470.4" y="82.8" width="3.2" height="3.3" fill="#ececec"/><path d="M1475.1,82.8 H1479.3 V80 L1484.1,84.45 L1479.3,89 V86.1 H1475.1 Z" fill="#ececec"/><path d="M1465.9,67.2 H1483.1 V78.7" fill="none" stroke="#ececec" stroke-width="1.6"/><path d="M1465.9,77.8 H1477.2 V79.8" fill="none" stroke="#ececec" stroke-width="1.4"/><path d="M1466.5,69.6 L1469.9,72.6 L1466.5,75.6" fill="none" stroke="#1a96e6" stroke-width="1.5" stroke-dasharray="1.5,0.9"/><path d="M1470.8999999999999,69.6 L1474.3,72.6 L1470.8999999999999,75.6" fill="none" stroke="#ececec" stroke-width="1.5" stroke-dasharray="1.5,0.9"/><path d="M1475.3,69.6 L1478.7,72.6 L1475.3,75.6" fill="none" stroke="#1a96e6" stroke-width="1.5" stroke-dasharray="1.5,0.9"/></svg>
<svg style="left:1820px;top:56px" width="44" height="42" viewBox="1820 56 44 42"><circle cx="1835.2" cy="67.1" r="2.4" fill="#0a9d0a"/><circle cx="1835.2" cy="86.7" r="2.4" fill="#0a9d0a"/><path d="M1838.8,67.35 H1842 A9.6,9.6 0 0 1 1842,86.55 H1838.8" fill="none" stroke="#ececec" stroke-width="5"/><path d="M1836,72 L1829.8,75.6 L1833.3,78.6 L1829.9,82 L1832.7,82 L1836.3,78.3 L1832.9,75.9 Z" fill="#ececec"/></svg>
<svg style="left:1866px;top:104px" width="54" height="420" viewBox="1866 104 54 420"><path d="M1881.4,112.9 H1890.4 L1896.5,119 V129.5 H1881.4 Z" fill="none" stroke="#ececec" stroke-width="3" stroke-linejoin="round"/><path d="M1890,112.4 V119.6 H1897.2 Z" fill="#ececec"/><polygon points="1899.40,106.40 1900.81,110.16 1904.82,110.34 1901.68,112.84 1902.75,116.71 1899.40,114.50 1896.05,116.71 1897.12,112.84 1893.98,110.34 1897.99,110.16" fill="#0a9d0a"/><path d="M1880,145.8 H1889 L1889.8,149.6 H1901 V155.2 H1885.2 L1882.6,166.7 H1880 Z" fill="#ececec"/><path d="M1886.4,156.8 H1904.2 L1901.6,166.7 H1883.6 Z" fill="#ececec"/><path d="M1890.4,181 H1893.6 V188 H1897.8 L1892,194.4 L1886.2,188 H1890.4 Z" fill="#0a9d0a"/><path d="M1881.1,198.4 L1884.4,193.6 H1887 L1886,195.4 L1884.3,198.4 Z M1902.8,198.4 L1899.6,193.6 H1897 L1898,195.4 L1899.7,198.4 Z" fill="#ececec"/><path fill-rule="evenodd" d="M1881.1,198.2 H1902.8 V203.6 Q1902.8,204.9 1901.5,204.9 H1882.4 Q1881.1,204.9 1881.1,203.6 Z M1888.2,200 H1895.6 V201.4 H1888.2 Z" fill="#ececec"/><rect x="1886.2" y="219.2" width="11.8" height="3.1" fill="#ececec"/><rect x="1881.5" y="224.5" width="21.2" height="8.4" rx="2" fill="#b9b9b9"/><rect x="1885.2" y="230.6" width="13.8" height="9" fill="#353535"/><rect x="1886.2" y="231.4" width="11.8" height="7.8" fill="#ececec"/><path d="M1885.5,266 V260.5 H1895 L1901.2,266.7 V279.9 H1885.5 V276" fill="none" stroke="#ececec" stroke-width="3" stroke-linejoin="round"/><path d="M1894.6,260 V267.2 H1901.8 Z" fill="#ececec"/><path d="M1881.1,269.8 H1889.2 V266.6 L1894.9,271.2 L1889.2,275.8 V272.7 H1881.1 Z" fill="#0a9d0a"/><path d="M1896.5,303.6 L1890.4,297.5 H1881.5 V316.9 H1896.5 V314" fill="none" stroke="#ececec" stroke-width="3" stroke-linejoin="round"/><path d="M1890,297 V304.2 H1897.2 Z" fill="#ececec"/><path d="M1890.5,307.6 H1898.6 V304.4 L1904.3,309 L1898.6,313.6 V310.5 H1890.5 Z" fill="#0a9d0a"/><path d="M1888,346.3 H1892.5 Q1897.8,346.3 1897.8,351.3 Q1897.8,355.8 1894.6,355.6" fill="none" stroke="#7e7e7e" stroke-width="3.1"/><path d="M1881.5,346.3 L1888.6,340.4 V352.2 Z" fill="#7e7e7e"/><path d="M1896,383.3 H1890.4 Q1884.8,383.3 1884.8,388.3 Q1884.8,392.8 1888.2,392.6" fill="none" stroke="#ececec" stroke-width="3.1"/><path d="M1902.5,383.3 L1895.4,377.4 V389.2 Z" fill="#ececec"/><rect x="1879.8" y="415" width="17" height="16.7" fill="#ececec"/><rect x="1885.6" y="422.3" width="20" height="18" fill="#353535"/><rect x="1887" y="423.7" width="17.2" height="15.3" fill="#ececec"/><path d="M1883.9,453.2 L1896.4,468.4 M1900.3,453.2 L1887.8,468.4" stroke="#ececec" stroke-width="3.1" stroke-linecap="round"/><circle cx="1885" cy="470.7" r="3.1" fill="none" stroke="#ececec" stroke-width="2.9"/><circle cx="1898.8" cy="470.7" r="3.1" fill="none" stroke="#ececec" stroke-width="2.9"/><rect x="1880.6" y="492.6" width="19.8" height="19.8" fill="none" stroke="#ececec" stroke-width="1.3"/><rect x="1884.6" y="489" width="12" height="6.6" fill="#353535"/><rect x="1886" y="490" width="9.2" height="4.8" rx="0.8" fill="#ececec"/><path d="M1884,496.2 H1896 V507 L1893,510.2 H1884 Z" fill="#ececec"/></svg>
<svg style="left:1197px;top:104px" width="664" height="150" viewBox="1197 104 664 150"><path d="M1219,115.2 H1228.4 L1226,117.8 H1216.4 Z" fill="#1a96e6"/><path d="M1221.2,119.8 H1231 L1228.4,122.6 H1218.6 Z" fill="#86cdf2"/><path d="M1222.2,125 H1231.8 L1229.2,127.8 H1219.6 Z" fill="#f2f2f2"/><path d="M1392,126.5 V113.3 H1403.4" fill="none" stroke="#ececec" stroke-width="1.1"/><path d="M1398.6,121.6 L1400.4,123.4 L1407,115.2 L1406.4,114.6 Z" fill="#ececec"/><path d="M1396.6,123.2 L1398,121.9 L1400,124 L1398.6,125.4 Z" fill="#ececec"/><path d="M1392.8,127.8 C1393.8,125.4 1395,124.2 1396.6,124.2 C1397.6,125.6 1396,127.8 1392.8,127.8 Z" fill="#1a96e6"/><circle cx="1458.4" cy="126.6" r="1.5" fill="#ececec"/><circle cx="1469.6" cy="115" r="1.5" fill="#ececec"/><path d="M1458.6,126 C1459,121 1463,117.4 1469,115.2" fill="none" stroke="#ececec" stroke-width="1.3"/><path d="M1457.6,118.6 L1460.4,121.8 M1461.4,115.4 L1463.4,118.8 M1466.6,121.8 L1463,122 M1464.2,125.4 L1460.6,124.6" fill="none" stroke="#ececec" stroke-width="1.2"/><rect x="1520.8" y="114" width="1.2" height="13.2" fill="#0a9d0a"/><rect x="1524.2" y="114.2" width="6.6" height="2.9" fill="#ececec"/><rect x="1524.2" y="119.1" width="9.8" height="3.2" fill="#ececec"/><rect x="1524.2" y="124.3" width="5.8" height="2.9" fill="#ececec"/><rect x="1584" y="122" width="7" height="7.2" fill="#ececec"/><path d="M1587.4,115.6 L1589.2,113.4 C1591,113.8 1592.6,115.6 1592.2,117.6 L1597,122 C1598.8,121.4 1600.6,123 1600.6,125 L1598.6,123.8 L1597,125.4 L1598,127.4 C1596,127.4 1594.4,125.6 1595,123.8 L1590.4,119.4 C1588.6,120 1586.8,118.4 1586.8,116.4 L1588.8,117.4 L1590.2,116 L1589.2,114 Z" fill="#0a9d0a"/><path d="M1659,118.6 V117.8 L1655.2,114 H1649 V126.6 H1659 V125.2" fill="none" stroke="#ececec" stroke-width="1.9" stroke-linejoin="round"/><path d="M1654.8,113.4 V118.2 H1659.6 Z" fill="#ececec"/><path d="M1655,120.8 H1660.2 V118.6 L1664.2,121.8 L1660.2,125 V122.8 H1655 Z" fill="#0a9d0a"/><rect x="1713.6" y="115.9" width="13" height="10.8" fill="none" stroke="#0a9d0a" stroke-width="1.1"/><path d="M1715.6,124.8 L1719,119.6 L1722.6,124.8 Z" fill="#0a9d0a"/><circle cx="1722.8" cy="119.2" r="1.6" fill="#0a9d0a"/><path d="M1779.4,118.6 A5.9,5.9 0 1 1 1783,126.2" fill="none" stroke="#ececec" stroke-width="1.9"/><path d="M1776.4,119.4 H1782.6 L1779.4,122.8 Z" fill="#ececec"/><circle cx="1785" cy="120" r="1.8" fill="#0a9d0a"/><rect x="1776" y="124" width="5.8" height="5.4" fill="#ececec"/><path d="M1212,155 H1220 M1216,151 V159" stroke="#0a9d0a" stroke-width="1.7"/><path d="M1210.4,161 H1221.2 L1218.4,164 H1207.6 Z" fill="#ececec"/><path d="M1456.6,162 L1462.2,156.2 L1467.8,162" fill="none" stroke="#ececec" stroke-width="2"/><path d="M1492.2,154.2 L1497.8,160 L1503.4,154.2" fill="none" stroke="#ececec" stroke-width="2"/><path d="M1527.6,153.6 H1540.2 M1531.4,153 V151.6 H1536.4 V153" fill="none" stroke="#ececec" stroke-width="1.5"/><path d="M1528.6,155 H1539.2 L1538.4,164.6 H1529.4 Z" fill="#ececec"/><path d="M1531.4,156.4 V163 M1533.9,156.4 V163 M1536.4,156.4 V163" stroke="#6a6a6a" stroke-width="0.9"/><g fill="#ececec"><rect x="1577.7" y="150.8" width="2.6" height="3.6" transform="rotate(0 1579 158)"/><rect x="1577.7" y="150.8" width="2.6" height="3.6" transform="rotate(45 1579 158)"/><rect x="1577.7" y="150.8" width="2.6" height="3.6" transform="rotate(90 1579 158)"/><rect x="1577.7" y="150.8" width="2.6" height="3.6" transform="rotate(135 1579 158)"/><rect x="1577.7" y="150.8" width="2.6" height="3.6" transform="rotate(180 1579 158)"/><rect x="1577.7" y="150.8" width="2.6" height="3.6" transform="rotate(225 1579 158)"/><rect x="1577.7" y="150.8" width="2.6" height="3.6" transform="rotate(270 1579 158)"/><rect x="1577.7" y="150.8" width="2.6" height="3.6" transform="rotate(315 1579 158)"/></g><circle cx="1579" cy="158" r="3.7" fill="none" stroke="#ececec" stroke-width="2.4"/><circle cx="1611.6" cy="157" r="4.9" fill="none" stroke="#ececec" stroke-width="1.8"/><path d="M1615.2,160.8 L1618.8,164.6" stroke="#ececec" stroke-width="2.1" stroke-linecap="round"/><path d="M1200,188.8 H1208.2 L1204.1,193.4 Z" fill="#a9a9a9"/><path d="M1218,185.2 H1224.2 L1227.8,188.8 V196.8 H1218 Z" fill="none" stroke="#3f86f5" stroke-width="1.9" stroke-linejoin="round"/><path d="M1224,185.4 V189.2 H1227.6" fill="none" stroke="#3f86f5" stroke-width="1.3"/><circle cx="1230.6" cy="210.2" r="1.5" fill="none" stroke="#3f86f5" stroke-width="1.1"/><rect x="1229.2" y="219" width="3" height="3" fill="none" stroke="#3f86f5" stroke-width="1.1"/><rect x="1239.2" y="208.8" width="3" height="3" fill="none" stroke="#3f86f5" stroke-width="1.1"/><path d="M1231.2,211.8 L1231,218.6 M1231,218.6 C1231.6,213.6 1234.4,210.8 1239,210.4" fill="none" stroke="#3f86f5" stroke-width="1.1"/><circle cx="1230.6" cy="234.2" r="1.5" fill="none" stroke="#3f86f5" stroke-width="1.1"/><rect x="1229.2" y="243" width="3" height="3" fill="none" stroke="#3f86f5" stroke-width="1.1"/><rect x="1239.2" y="232.8" width="3" height="3" fill="none" stroke="#3f86f5" stroke-width="1.1"/><path d="M1231.2,235.8 L1231,242.6 M1231,242.6 C1231.6,237.6 1234.4,234.8 1239,234.4" fill="none" stroke="#3f86f5" stroke-width="1.1"/></svg>
<svg style="left:340px;top:1008px" width="70" height="32" viewBox="340 1008 70 32"><path d="M350.2,1023.6 C353,1018.6 361,1018.6 363.8,1023.6 C361,1028.6 353,1028.6 350.2,1023.6 Z" fill="none" stroke="#ececec" stroke-width="2"/><circle cx="357" cy="1023.6" r="2.5" fill="#ececec"/><path d="M352.6,1018.4 L351.4,1016.6 M357,1017.4 V1015.4 M361.4,1018.4 L362.6,1016.6" stroke="#ececec" stroke-width="1.5"/><rect x="387.6" y="1022" width="9.6" height="7.8" fill="#ececec"/><path d="M394.4,1022 V1019.6 A2.9,2.9 0 0 1 400.2,1019.6 V1021.4" fill="none" stroke="#ececec" stroke-width="1.6"/></svg>
</div></body></html>
